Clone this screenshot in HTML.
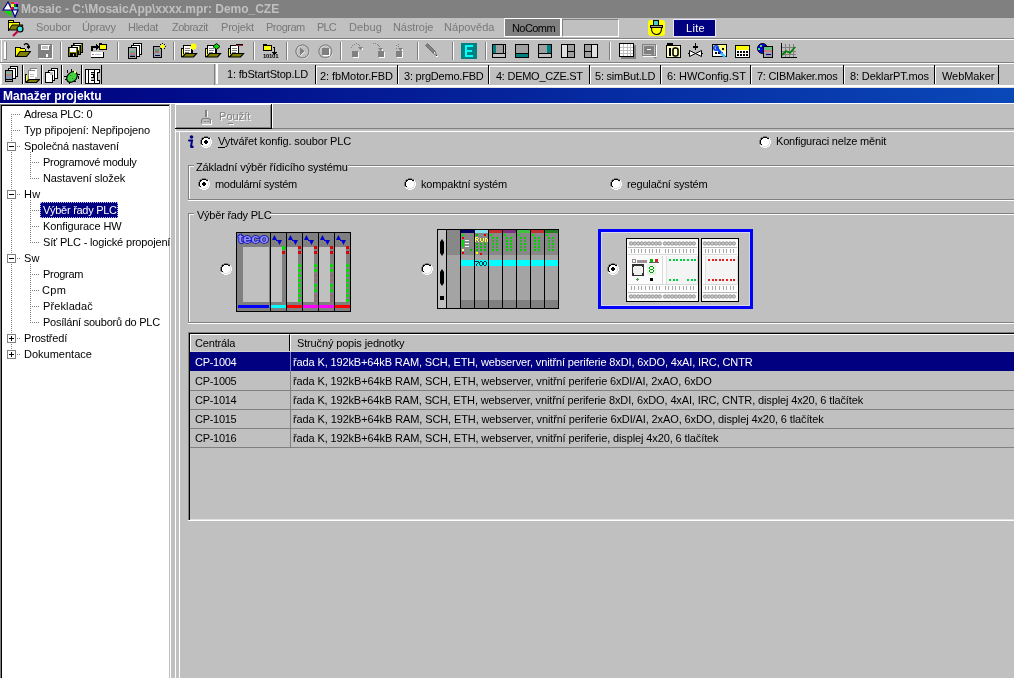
<!DOCTYPE html><html><head><meta charset="utf-8"><style>
html,body{margin:0;padding:0}
body{width:1014px;height:678px;overflow:hidden;position:relative;background:#c0c0c0;font-family:"Liberation Sans",sans-serif;font-size:11px}
.t{position:absolute;white-space:nowrap;will-change:transform}
svg{display:block}
</style></head><body>
<div style="position:absolute;left:0px;top:0px;width:1014px;height:18px;background:#808080;"></div>
<svg style="position:absolute;left:2px;top:1px" width="17" height="17" viewBox="0 0 17 17" shape-rendering="crispEdges"><path d="M6 1 L1 9 L10 9 Z" fill="#fff" stroke="#000080" stroke-width="1.2" shape-rendering="auto"/><path d="M2 10 L9 10 L9 16 Z" fill="#00e000" shape-rendering="auto"/><rect x="9" y="1" width="3" height="3" fill="#c04020"/><rect x="12" y="1" width="4" height="3" fill="#e040e0"/><rect x="9" y="3" width="3" height="3" fill="#f0f040"/><rect x="12" y="3" width="2" height="3" fill="#008000"/><rect x="14" y="3" width="2" height="3" fill="#000060"/><rect x="9" y="6" width="3" height="3" fill="#e00040"/><rect x="12" y="6" width="3" height="2" fill="#40e0f0"/><path d="M10 9 L16 9 L13 16 Z" fill="#fff" stroke="#000080" stroke-width="1.2" shape-rendering="auto"/></svg>
<div class="t" style="left:20.70px;top:1.84px;color:#c0c0c0;font-size:12px;font-weight:bold;line-height:14px;letter-spacing:-0.015px;">Mosaic - C:\MosaicApp\xxxx.mpr: Demo_CZE</div>
<svg style="position:absolute;left:8px;top:19px" width="18" height="18" viewBox="0 0 18 18" shape-rendering="crispEdges"><rect x="0" y="1" width="6" height="2" fill="#000"/><rect x="1" y="2" width="4" height="1" fill="#ffff00"/><rect x="0" y="2" width="1" height="10" fill="#000"/><rect x="1" y="3" width="10" height="6" fill="#ffff00"/><rect x="0" y="3" width="11" height="1" fill="#000"/><rect x="11" y="3" width="1" height="6" fill="#000"/><path d="M1 11 L4 6 L15 6 L12 11 Z" fill="#808000" stroke="#000" stroke-width="1" shape-rendering="auto"/><circle cx="12" cy="10" r="3" fill="#40e0e0" stroke="#000" stroke-width="1.2" shape-rendering="auto"/><path d="M10 12 L5 17" stroke="#c00040" stroke-width="2.2" shape-rendering="auto"/></svg>
<div class="t" style="left:36.20px;top:20.69px;color:#787878;font-size:11px;font-weight:normal;line-height:13px;letter-spacing:-0.040px;">Soubor</div>
<div class="t" style="left:82.00px;top:20.69px;color:#787878;font-size:11px;font-weight:normal;line-height:13px;letter-spacing:-0.180px;">Úpravy</div>
<div class="t" style="left:128.20px;top:20.69px;color:#787878;font-size:11px;font-weight:normal;line-height:13px;letter-spacing:-0.300px;">Hledat</div>
<div class="t" style="left:171.90px;top:20.69px;color:#787878;font-size:11px;font-weight:normal;line-height:13px;letter-spacing:-0.500px;">Zobrazit</div>
<div class="t" style="left:221.20px;top:20.69px;color:#787878;font-size:11px;font-weight:normal;line-height:13px;letter-spacing:-0.200px;">Projekt</div>
<div class="t" style="left:266.40px;top:20.69px;color:#787878;font-size:11px;font-weight:normal;line-height:13px;letter-spacing:-0.483px;">Program</div>
<div class="t" style="left:317.40px;top:20.69px;color:#787878;font-size:11px;font-weight:normal;line-height:13px;letter-spacing:-0.850px;">PLC</div>
<div class="t" style="left:348.70px;top:20.69px;color:#787878;font-size:11px;font-weight:normal;line-height:13px;letter-spacing:0.125px;">Debug</div>
<div class="t" style="left:392.70px;top:20.69px;color:#787878;font-size:11px;font-weight:normal;line-height:13px;letter-spacing:-0.086px;">Nástroje</div>
<div class="t" style="left:444.10px;top:20.69px;color:#787878;font-size:11px;font-weight:normal;line-height:13px;letter-spacing:0.043px;">Nápověda</div>
<div style="position:absolute;left:504px;top:18px;width:58px;height:19px;background:#ffffff;"></div>
<div style="position:absolute;left:505px;top:19px;width:55px;height:17px;background:#808080;"></div>
<div style="position:absolute;left:562px;top:19px;width:57px;height:18px;background:#c0c0c0;box-sizing:border-box;border-top:1px solid #808080;border-left:1px solid #808080;border-right:1px solid #fff;border-bottom:1px solid #fff"></div>
<div class="t" style="left:511.50px;top:21.69px;color:#000;font-size:11px;font-weight:normal;line-height:13px;letter-spacing:-0.580px;">NoComm</div>
<svg style="position:absolute;left:648px;top:20px" width="17" height="16" viewBox="0 0 17 16" shape-rendering="crispEdges"><rect x="0" y="0" width="17" height="16" rx="3" fill="#ffff00" shape-rendering="auto"/><rect x="5" y="0" width="6" height="6" fill="#000"/><rect x="6" y="1" width="4" height="4" fill="#40d0d0"/><rect x="2" y="5" width="13" height="3" fill="#000"/><rect x="3" y="6" width="11" height="1" fill="#a0a080"/><path d="M3.5 8 Q3.5 14.5 8.5 14.5 Q13.5 14.5 13.5 8" fill="none" stroke="#000" stroke-width="1.1" shape-rendering="auto"/></svg>
<div style="position:absolute;left:673px;top:19px;width:43px;height:18px;background:#e8e8f8;"></div>
<div style="position:absolute;left:674px;top:20px;width:41px;height:16px;background:#000080;"></div>
<div class="t" style="left:686.20px;top:21.69px;color:#fff;font-size:11px;font-weight:normal;line-height:13px;letter-spacing:0.333px;">Lite</div>
<div style="position:absolute;left:0px;top:38px;width:1014px;height:1px;background:#808080;"></div>
<div style="position:absolute;left:0px;top:39px;width:1014px;height:1px;background:#ffffff;"></div>
<div style="position:absolute;left:1px;top:40px;width:1px;height:22px;background:#ffffff;"></div>
<div style="position:absolute;left:0px;top:62px;width:1014px;height:1px;background:#808080;"></div>
<div style="position:absolute;left:0px;top:63px;width:1014px;height:1px;background:#ffffff;"></div>
<div style="position:absolute;left:4px;top:42px;width:2px;height:18px;background:#ffffff;"></div>
<div style="position:absolute;left:6px;top:42px;width:1px;height:18px;background:#808080;"></div>
<div style="position:absolute;left:4px;top:59px;width:3px;height:1px;background:#808080;"></div>
<svg style="position:absolute;left:15px;top:43px" width="16" height="15" viewBox="0 0 16 15" shape-rendering="crispEdges"><path d="M9 2 Q12 -1 14 3" fill="none" stroke="#000" stroke-width="1.3" shape-rendering="auto"/><rect x="12" y="3" width="3" height="2" fill="#000"/><rect x="13" y="4" width="1" height="2" fill="#000"/><rect x="0" y="4" width="6" height="1" fill="#000"/><rect x="1" y="5" width="4" height="1" fill="#ffff00"/><rect x="0" y="5" width="1" height="9" fill="#000"/><rect x="1" y="6" width="9" height="7" fill="#ffff00"/><rect x="5" y="5" width="5" height="1" fill="#000"/><rect x="10" y="6" width="1" height="2" fill="#000"/><path d="M1.5 13.5 L5 8.5 L15.5 8.5 L11.5 13.5 Z" fill="#808000" stroke="#000" stroke-width="1.2" shape-rendering="auto"/></svg>
<svg style="position:absolute;left:38px;top:44px" width="16" height="16" viewBox="0 0 16 16" shape-rendering="crispEdges"><rect x="0" y="0" width="14" height="14" fill="#808080"/><rect x="14" y="1" width="1" height="14" fill="#ffffff"/><rect x="1" y="14" width="14" height="1" fill="#ffffff"/><rect x="3" y="1" width="8" height="5" fill="#ffffff"/><rect x="4" y="2" width="6" height="3" fill="#c0c0c0"/><rect x="11" y="1" width="1" height="1" fill="#ffffff"/><rect x="8" y="10" width="2" height="3" fill="#ffffff"/></svg>
<div style="position:absolute;left:60px;top:42px;width:1px;height:18px;background:#808080;"></div>
<div style="position:absolute;left:61px;top:42px;width:1px;height:18px;background:#ffffff;"></div>
<svg style="position:absolute;left:68px;top:43px" width="16" height="15" viewBox="0 0 16 15" shape-rendering="crispEdges"><rect x="5" y="0" width="10" height="10" fill="#000"/><rect x="6" y="1" width="8" height="8" fill="#808000"/><rect x="7" y="1" width="6" height="4" fill="#ffffff"/><rect x="7" y="6" width="6" height="3" fill="#000"/><rect x="10" y="7" width="1" height="2" fill="#c0c0c0"/><rect x="3" y="2" width="10" height="10" fill="#000"/><rect x="4" y="3" width="8" height="8" fill="#808000"/><rect x="5" y="3" width="6" height="4" fill="#ffffff"/><rect x="5" y="8" width="6" height="3" fill="#000"/><rect x="8" y="9" width="1" height="2" fill="#c0c0c0"/><rect x="0" y="4" width="10" height="10" fill="#000"/><rect x="1" y="5" width="8" height="8" fill="#808000"/><rect x="2" y="5" width="6" height="4" fill="#ffffff"/><rect x="2" y="10" width="6" height="3" fill="#000"/><rect x="5" y="11" width="1" height="2" fill="#c0c0c0"/></svg>
<svg style="position:absolute;left:91px;top:43px" width="17" height="15" viewBox="0 0 17 15" shape-rendering="crispEdges"><rect x="0" y="4" width="2" height="4" fill="#000"/><rect x="0" y="3" width="6" height="2" fill="#000"/><rect x="5" y="1" width="1" height="6" fill="#000"/><rect x="6" y="2" width="1" height="4" fill="#000"/><rect x="7" y="3" width="1" height="2" fill="#000"/><rect x="8" y="1" width="8" height="6" fill="#000"/><rect x="9" y="2" width="6" height="4" fill="#ffff00"/><rect x="8" y="0" width="3" height="1" fill="#000"/><rect x="0" y="9" width="12" height="5" fill="#ffffff"/><rect x="12" y="9" width="1" height="6" fill="#000"/><rect x="0" y="14" width="13" height="1" fill="#000"/><rect x="1" y="11" width="2" height="1" fill="#c08080"/><rect x="4" y="11" width="6" height="1" fill="#c0c0e0"/></svg>
<div style="position:absolute;left:117px;top:42px;width:1px;height:18px;background:#808080;"></div>
<div style="position:absolute;left:118px;top:42px;width:1px;height:18px;background:#ffffff;"></div>
<svg style="position:absolute;left:128px;top:43px" width="14" height="16" viewBox="0 0 14 16" shape-rendering="crispEdges"><rect x="5" y="0" width="9" height="12" fill="#000"/><rect x="6" y="1" width="7" height="10" fill="#ffffff"/><rect x="3" y="2" width="9" height="12" fill="#000"/><rect x="4" y="3" width="7" height="10" fill="#ffffff"/><rect x="0" y="4" width="9" height="12" fill="#000"/><rect x="1" y="5" width="7" height="10" fill="#a0a8a8"/><rect x="2" y="8" width="5" height="2" fill="#60b080"/><rect x="2" y="10" width="5" height="2" fill="#c07080"/><rect x="2" y="12" width="5" height="1" fill="#6080c0"/><rect x="2" y="13" width="5" height="1" fill="#000"/></svg>
<svg style="position:absolute;left:152px;top:43px" width="16" height="16" viewBox="0 0 16 16" shape-rendering="crispEdges"><rect x="1" y="3" width="9" height="12" fill="#000"/><rect x="2" y="4" width="7" height="10" fill="#a0a0b0"/><rect x="3" y="6" width="4" height="2" fill="#60a060"/><rect x="3" y="8" width="4" height="2" fill="#a07070"/><rect x="3" y="12" width="5" height="1" fill="#000040"/><rect x="8" y="1" width="1" height="1" fill="#000"/><rect x="10" y="0" width="1" height="1" fill="#000"/><rect x="12" y="1" width="1" height="1" fill="#000"/><rect x="9" y="2" width="3" height="3" fill="#ffff00"/><rect x="8" y="3" width="5" height="1" fill="#ffff00"/><rect x="10" y="1" width="1" height="5" fill="#ffff00"/><rect x="8" y="5" width="1" height="1" fill="#000"/><rect x="12" y="5" width="1" height="1" fill="#000"/><rect x="13" y="3" width="1" height="1" fill="#000"/></svg>
<div style="position:absolute;left:173px;top:42px;width:1px;height:18px;background:#808080;"></div>
<div style="position:absolute;left:174px;top:42px;width:1px;height:18px;background:#ffffff;"></div>
<svg style="position:absolute;left:181px;top:43px" width="17" height="15" viewBox="0 0 17 15" shape-rendering="crispEdges"><rect x="0" y="5" width="2" height="9" fill="#000"/><rect x="1" y="6" width="1" height="7" fill="#ffff00"/><rect x="2" y="2" width="9" height="9" fill="#000"/><rect x="3" y="3" width="7" height="8" fill="#ffffff"/><rect x="4" y="5" width="5" height="1" fill="#808080"/><rect x="4" y="7" width="5" height="1" fill="#808080"/><rect x="4" y="9" width="4" height="1" fill="#808080"/><path d="M1.5 14 L4.5 10.5 L15.5 10.5 L12.5 14 Z" fill="#808000" stroke="#000" stroke-width="1.2" shape-rendering="auto"/><rect x="10" y="1" width="5" height="5" fill="#ffff00"/><rect x="9" y="3" width="7" height="1" fill="#ffff00"/><rect x="12" y="0" width="1" height="7" fill="#ffff00"/><rect x="10" y="7" width="2" height="3" fill="#000"/></svg>
<svg style="position:absolute;left:205px;top:43px" width="17" height="15" viewBox="0 0 17 15" shape-rendering="crispEdges"><rect x="0" y="5" width="2" height="9" fill="#000"/><rect x="1" y="6" width="1" height="7" fill="#ffff00"/><rect x="2" y="2" width="9" height="9" fill="#000"/><rect x="3" y="3" width="7" height="8" fill="#ffffff"/><rect x="4" y="5" width="5" height="1" fill="#808080"/><rect x="4" y="7" width="5" height="1" fill="#808080"/><rect x="4" y="9" width="4" height="1" fill="#808080"/><path d="M1.5 14 L4.5 10.5 L15.5 10.5 L12.5 14 Z" fill="#808000" stroke="#000" stroke-width="1.2" shape-rendering="auto"/><path d="M11.5 0.5 L15 3.5 L11.5 6.5 L8 3.5 Z" fill="#00e000" stroke="#000" stroke-width="1" shape-rendering="auto"/><rect x="11" y="6" width="1" height="4" fill="#000"/></svg>
<svg style="position:absolute;left:228px;top:43px" width="17" height="15" viewBox="0 0 17 15" shape-rendering="crispEdges"><rect x="0" y="5" width="2" height="9" fill="#000"/><rect x="1" y="6" width="1" height="7" fill="#ffff00"/><rect x="2" y="2" width="9" height="9" fill="#000"/><rect x="3" y="3" width="7" height="8" fill="#ffffff"/><rect x="4" y="5" width="5" height="1" fill="#808080"/><rect x="4" y="7" width="5" height="1" fill="#808080"/><rect x="4" y="9" width="4" height="1" fill="#808080"/><path d="M1.5 14 L4.5 10.5 L15.5 10.5 L12.5 14 Z" fill="#808000" stroke="#000" stroke-width="1.2" shape-rendering="auto"/><rect x="8" y="1" width="7" height="2" fill="#a03030"/><rect x="10" y="3" width="1" height="8" fill="#000"/><rect x="8" y="1" width="7" height="1" fill="#000"/></svg>
<div style="position:absolute;left:253px;top:42px;width:1px;height:18px;background:#808080;"></div>
<div style="position:absolute;left:254px;top:42px;width:1px;height:18px;background:#ffffff;"></div>
<svg style="position:absolute;left:263px;top:43px" width="17" height="16" viewBox="0 0 17 16" shape-rendering="crispEdges"><rect x="0" y="1" width="4" height="1" fill="#000"/><rect x="0" y="2" width="9" height="6" fill="#000"/><rect x="1" y="3" width="7" height="4" fill="#ffff00"/><rect x="10" y="4" width="2" height="1" fill="#000"/><rect x="11" y="4" width="1" height="8" fill="#000"/><rect x="10" y="10" width="3" height="1" fill="#000"/><rect x="9" y="9" width="5" height="1" fill="#000"/><rect x="11" y="11" width="1" height="1" fill="#000"/></svg>
<div class="t" style="left:263.00px;top:50.42px;color:#000;font-size:6px;font-weight:bold;line-height:13px;letter-spacing:-0.300px;">10101</div>
<div style="position:absolute;left:286px;top:42px;width:1px;height:18px;background:#808080;"></div>
<div style="position:absolute;left:287px;top:42px;width:1px;height:18px;background:#ffffff;"></div>
<svg style="position:absolute;left:295px;top:44px" width="16" height="16" viewBox="0 0 16 16" shape-rendering="crispEdges"><circle cx="7.5" cy="7.5" r="6.5" fill="none" stroke="#808080" stroke-width="1.2" shape-rendering="auto"/><circle cx="8" cy="8" r="6.5" fill="none" stroke="#fff" stroke-width="0.8" shape-rendering="auto"/><circle cx="7.5" cy="7.5" r="6.5" fill="none" stroke="#808080" stroke-width="1" shape-rendering="auto"/><rect x="5" y="4" width="1" height="7" fill="#808080"/><path d="M5 3.5 L10 7.5 L5 11.5 Z" fill="#808080" shape-rendering="auto"/><path d="M10 7.5 L5.5 11.5" stroke="#fff" stroke-width="1" shape-rendering="auto"/></svg>
<svg style="position:absolute;left:318px;top:44px" width="16" height="16" viewBox="0 0 16 16" shape-rendering="crispEdges"><circle cx="7.5" cy="7.5" r="6.5" fill="none" stroke="#808080" stroke-width="1.2" shape-rendering="auto"/><circle cx="8" cy="8" r="6.5" fill="none" stroke="#fff" stroke-width="0.8" shape-rendering="auto"/><circle cx="7.5" cy="7.5" r="6.5" fill="none" stroke="#808080" stroke-width="1" shape-rendering="auto"/><rect x="4" y="4" width="7" height="7" fill="#808080"/><rect x="11" y="5" width="1" height="7" fill="#ffffff"/><rect x="5" y="11" width="7" height="1" fill="#ffffff"/></svg>
<div style="position:absolute;left:340px;top:42px;width:1px;height:18px;background:#808080;"></div>
<div style="position:absolute;left:341px;top:42px;width:1px;height:18px;background:#ffffff;"></div>
<svg style="position:absolute;left:350px;top:43px" width="16" height="16" viewBox="0 0 16 16" shape-rendering="crispEdges"><rect x="1" y="4" width="1" height="1" fill="#808080"/><rect x="2" y="2" width="1" height="1" fill="#808080"/><rect x="4" y="1" width="1" height="1" fill="#808080"/><rect x="6" y="0" width="1" height="1" fill="#808080"/><rect x="8" y="1" width="1" height="1" fill="#808080"/><rect x="9" y="2" width="1" height="1" fill="#808080"/><path d="M8 4 L13 4 L10.5 7 Z" fill="#808080" shape-rendering="auto"/><rect x="12" y="5" width="1" height="2" fill="#ffffff"/><rect x="2" y="8" width="6" height="6" fill="#808080"/><rect x="8" y="9" width="1" height="6" fill="#ffffff"/><rect x="3" y="14" width="6" height="1" fill="#ffffff"/></svg>
<svg style="position:absolute;left:372px;top:43px" width="16" height="16" viewBox="0 0 16 16" shape-rendering="crispEdges"><rect x="1" y="0" width="1" height="1" fill="#808080"/><rect x="3" y="0" width="1" height="1" fill="#808080"/><rect x="5" y="1" width="1" height="1" fill="#808080"/><rect x="6" y="2" width="1" height="1" fill="#808080"/><rect x="7" y="3" width="1" height="1" fill="#808080"/><path d="M6 5 L11 5 L8.5 8 Z" fill="#808080" shape-rendering="auto"/><rect x="10" y="6" width="1" height="2" fill="#ffffff"/><rect x="6" y="8" width="6" height="6" fill="#808080"/><rect x="12" y="9" width="1" height="6" fill="#ffffff"/><rect x="7" y="14" width="6" height="1" fill="#ffffff"/></svg>
<svg style="position:absolute;left:395px;top:43px" width="16" height="16" viewBox="0 0 16 16" shape-rendering="crispEdges"><rect x="1" y="2" width="1" height="1" fill="#808080"/><rect x="3" y="1" width="1" height="1" fill="#808080"/><rect x="3" y="3" width="1" height="1" fill="#808080"/><rect x="1" y="5" width="1" height="1" fill="#808080"/><path d="M3 5 L8 5 L5.5 8 Z" fill="#808080" shape-rendering="auto"/><rect x="7" y="6" width="1" height="2" fill="#ffffff"/><rect x="1" y="8" width="6" height="6" fill="#808080"/><rect x="7" y="9" width="1" height="6" fill="#ffffff"/><rect x="2" y="14" width="6" height="1" fill="#ffffff"/></svg>
<div style="position:absolute;left:417px;top:42px;width:1px;height:18px;background:#808080;"></div>
<div style="position:absolute;left:418px;top:42px;width:1px;height:18px;background:#ffffff;"></div>
<svg style="position:absolute;left:424px;top:43px" width="16" height="16" viewBox="0 0 16 16" shape-rendering="crispEdges"><path d="M1.5 2.5 L3.5 0.5 L11 8 L9 10 Z" fill="#808080" stroke="#707070" stroke-width="1" shape-rendering="auto"/><path d="M9 10 L11 8 L12.5 12.5 Z" fill="#fff" stroke="#707070" stroke-width="1" shape-rendering="auto"/><rect x="12" y="12" width="1" height="1" fill="#404040"/><rect x="12" y="13" width="2" height="1" fill="#ffffff"/></svg>
<div style="position:absolute;left:452px;top:42px;width:1px;height:18px;background:#808080;"></div>
<div style="position:absolute;left:453px;top:42px;width:1px;height:18px;background:#ffffff;"></div>
<svg style="position:absolute;left:461px;top:43px" width="16" height="16" viewBox="0 0 16 16" shape-rendering="crispEdges"><rect x="0" y="0" width="16" height="16" fill="#008080"/><rect x="4" y="2" width="8" height="2" fill="#00ffff"/><rect x="4" y="2" width="2" height="12" fill="#00ffff"/><rect x="4" y="7" width="7" height="2" fill="#00ffff"/><rect x="4" y="12" width="8" height="2" fill="#00ffff"/></svg>
<div style="position:absolute;left:485px;top:42px;width:1px;height:18px;background:#808080;"></div>
<div style="position:absolute;left:486px;top:42px;width:1px;height:18px;background:#ffffff;"></div>
<svg style="position:absolute;left:492px;top:44px" width="14" height="14" viewBox="0 0 14 14" shape-rendering="crispEdges"><rect x="0" y="0" width="14" height="14" fill="#000"/><rect x="1" y="1" width="12" height="12" fill="#a0a0a0"/><rect x="1" y="1" width="3" height="8" fill="#008080"/><rect x="12" y="1" width="1" height="9" fill="#c0c0c0"/><rect x="11" y="1" width="1" height="9" fill="#000"/><rect x="1" y="9" width="12" height="1" fill="#000"/><rect x="1" y="10" width="12" height="3" fill="#c0c0c0"/></svg>
<svg style="position:absolute;left:515px;top:44px" width="14" height="14" viewBox="0 0 14 14" shape-rendering="crispEdges"><rect x="0" y="0" width="14" height="14" fill="#000"/><rect x="1" y="1" width="12" height="12" fill="#a0a0a0"/><rect x="1" y="9" width="12" height="1" fill="#000"/><rect x="1" y="10" width="12" height="3" fill="#008080"/></svg>
<svg style="position:absolute;left:538px;top:44px" width="14" height="14" viewBox="0 0 14 14" shape-rendering="crispEdges"><rect x="0" y="0" width="14" height="14" fill="#000"/><rect x="1" y="1" width="12" height="12" fill="#a0a0a0"/><rect x="9" y="1" width="4" height="8" fill="#008080"/><rect x="1" y="9" width="12" height="1" fill="#000"/><rect x="1" y="10" width="12" height="3" fill="#c0c0c0"/></svg>
<svg style="position:absolute;left:561px;top:44px" width="14" height="14" viewBox="0 0 14 14" shape-rendering="crispEdges"><rect x="0" y="0" width="14" height="14" fill="#000"/><rect x="1" y="1" width="12" height="12" fill="#a0a0a0"/><rect x="1" y="1" width="5" height="12" fill="#e0e0e0"/><rect x="6" y="1" width="1" height="12" fill="#000"/><rect x="7" y="7" width="6" height="1" fill="#000"/></svg>
<svg style="position:absolute;left:584px;top:44px" width="14" height="14" viewBox="0 0 14 14" shape-rendering="crispEdges"><rect x="0" y="0" width="14" height="14" fill="#000"/><rect x="1" y="1" width="12" height="12" fill="#a0a0a0"/><rect x="8" y="1" width="5" height="12" fill="#e0e0e0"/><rect x="7" y="1" width="1" height="12" fill="#000"/><rect x="1" y="7" width="6" height="1" fill="#000"/></svg>
<div style="position:absolute;left:609px;top:42px;width:1px;height:18px;background:#808080;"></div>
<div style="position:absolute;left:610px;top:42px;width:1px;height:18px;background:#ffffff;"></div>
<svg style="position:absolute;left:619px;top:43px" width="17" height="16" viewBox="0 0 17 16" shape-rendering="crispEdges"><rect x="2" y="2" width="15" height="14" fill="#808080"/><rect x="0" y="0" width="15" height="14" fill="#000"/><rect x="1" y="1" width="13" height="12" fill="#ffffff"/><rect x="4" y="1" width="1" height="12" fill="#c0c0c0"/><rect x="8" y="1" width="1" height="12" fill="#c0c0c0"/><rect x="11" y="1" width="1" height="12" fill="#c0c0c0"/><rect x="1" y="4" width="13" height="1" fill="#c0c0c0"/><rect x="1" y="7" width="13" height="1" fill="#c0c0c0"/><rect x="1" y="10" width="13" height="1" fill="#c0c0c0"/></svg>
<svg style="position:absolute;left:642px;top:44px" width="17" height="16" viewBox="0 0 17 16" shape-rendering="crispEdges"><rect x="0" y="0" width="14" height="12" fill="#808080"/><rect x="1" y="1" width="12" height="10" fill="#c0c0c0"/><rect x="2" y="2" width="10" height="8" fill="#808080"/><rect x="14" y="1" width="1" height="12" fill="#ffffff"/><rect x="5" y="5" width="4" height="1" fill="#ffffff"/><path d="M10 10 L14 14" stroke="#808080" stroke-width="2" shape-rendering="auto"/><rect x="1" y="12" width="13" height="1" fill="#ffffff"/></svg>
<svg style="position:absolute;left:666px;top:43px" width="16" height="16" viewBox="0 0 16 16" shape-rendering="crispEdges"><rect x="1" y="0" width="6" height="2" fill="#000"/><rect x="0" y="2" width="15" height="13" fill="#000"/><rect x="1" y="3" width="13" height="11" fill="#ffffc0"/><rect x="3" y="5" width="2" height="8" fill="#000"/><rect x="7" y="5" width="5" height="8" rx="2" fill="none" stroke="#000" stroke-width="1.6" shape-rendering="auto"/></svg>
<svg style="position:absolute;left:688px;top:43px" width="16" height="16" viewBox="0 0 16 16" shape-rendering="crispEdges"><rect x="7" y="0" width="1" height="7" fill="#000"/><rect x="5" y="3" width="5" height="2" fill="#000"/><path d="M1.5 7.5 L7.5 10.5 L1.5 13.5 Z M13.5 7.5 L7.5 10.5 L13.5 13.5 Z" fill="#fff" stroke="#000" stroke-width="1" shape-rendering="auto"/><rect x="0" y="10" width="2" height="1" fill="#000"/><rect x="13" y="10" width="2" height="1" fill="#000"/></svg>
<svg style="position:absolute;left:712px;top:44px" width="16" height="16" viewBox="0 0 16 16" shape-rendering="crispEdges"><rect x="0" y="0" width="15" height="13" fill="#000"/><rect x="1" y="1" width="13" height="11" fill="#ffff80"/><rect x="1" y="7" width="13" height="5" fill="#ffffff"/><rect x="3" y="8" width="2" height="2" fill="#000"/><rect x="6" y="8" width="2" height="2" fill="#000"/><rect x="9" y="8" width="2" height="2" fill="#000"/><rect x="10" y="4" width="2" height="2" fill="#000"/><path d="M4 3 L10 10" stroke="#0040ff" stroke-width="2.5" shape-rendering="auto"/><path d="M9 9 L13 13" stroke="#40c0ff" stroke-width="2.5" shape-rendering="auto"/><circle cx="4" cy="4" r="2.2" fill="none" stroke="#0040ff" stroke-width="1.6" shape-rendering="auto"/></svg>
<svg style="position:absolute;left:735px;top:45px" width="16" height="14" viewBox="0 0 16 14" shape-rendering="crispEdges"><rect x="0" y="0" width="15" height="13" fill="#000"/><rect x="1" y="1" width="13" height="11" fill="#ffffff"/><rect x="1" y="1" width="13" height="4" fill="#ffff00"/><rect x="2" y="6" width="2" height="2" fill="#000"/><rect x="2" y="9" width="2" height="2" fill="#000"/><rect x="5" y="6" width="2" height="2" fill="#000"/><rect x="5" y="9" width="2" height="2" fill="#000"/><rect x="8" y="6" width="2" height="2" fill="#000"/><rect x="8" y="9" width="2" height="2" fill="#000"/><rect x="11" y="6" width="2" height="2" fill="#000"/><rect x="11" y="9" width="2" height="2" fill="#000"/></svg>
<svg style="position:absolute;left:757px;top:43px" width="17" height="16" viewBox="0 0 17 16" shape-rendering="crispEdges"><circle cx="5.5" cy="5.5" r="5" fill="#0000e0" stroke="#000" stroke-width="1" shape-rendering="auto"/><rect x="3" y="2" width="2" height="2" fill="#40e080"/><rect x="7" y="3" width="3" height="3" fill="#40e080"/><rect x="1" y="5" width="2" height="2" fill="#40e080"/><rect x="6" y="3" width="10" height="12" fill="#000"/><rect x="7" y="4" width="8" height="10" fill="#a0a0b0"/><rect x="7" y="4" width="8" height="3" fill="#60c080"/><rect x="7" y="7" width="8" height="2" fill="#d08080"/><rect x="9" y="11" width="5" height="1" fill="#000080"/></svg>
<svg style="position:absolute;left:780px;top:43px" width="17" height="16" viewBox="0 0 17 16" shape-rendering="crispEdges"><rect x="5" y="1" width="1" height="13" fill="#808080"/><rect x="9" y="1" width="1" height="13" fill="#808080"/><rect x="13" y="1" width="1" height="13" fill="#808080"/><rect x="1" y="4" width="15" height="1" fill="#808080"/><rect x="1" y="8" width="15" height="1" fill="#808080"/><rect x="1" y="11" width="15" height="1" fill="#808080"/><rect x="1" y="0" width="1" height="15" fill="#000"/><rect x="1" y="14" width="16" height="1" fill="#000"/><path d="M2 12 L6 8 L10 10 L15 4" fill="none" stroke="#008000" stroke-width="1.8" shape-rendering="auto"/></svg>
<div style="position:absolute;left:0px;top:64px;width:1px;height:21px;background:#ffffff;"></div>
<div style="position:absolute;left:22px;top:65px;width:1px;height:19px;background:#000;"></div>
<div style="position:absolute;left:41px;top:65px;width:1px;height:19px;background:#000;"></div>
<div style="position:absolute;left:61px;top:65px;width:1px;height:19px;background:#000;"></div>
<div style="position:absolute;left:81px;top:65px;width:1px;height:19px;background:#000;"></div>
<div style="position:absolute;left:101px;top:65px;width:1px;height:19px;background:#000;"></div>
<div style="position:absolute;left:1px;top:65px;width:1px;height:19px;background:#ffffff;"></div>
<div style="position:absolute;left:23px;top:65px;width:1px;height:19px;background:#ffffff;"></div>
<div style="position:absolute;left:42px;top:65px;width:1px;height:19px;background:#ffffff;"></div>
<div style="position:absolute;left:62px;top:65px;width:1px;height:19px;background:#ffffff;"></div>
<div style="position:absolute;left:82px;top:65px;width:1px;height:19px;background:#ffffff;"></div>
<svg style="position:absolute;left:5px;top:66px" width="14" height="16" viewBox="0 0 14 16" shape-rendering="crispEdges"><rect x="5" y="0" width="8" height="11" fill="#000"/><rect x="6" y="1" width="6" height="9" fill="#ffffff"/><rect x="3" y="2" width="8" height="11" fill="#000"/><rect x="4" y="3" width="6" height="9" fill="#ffffff"/><rect x="0" y="4" width="8" height="12" fill="#000"/><rect x="1" y="5" width="6" height="10" fill="#a0a0a0"/><rect x="1" y="6" width="6" height="2" fill="#88b098"/><rect x="1" y="8" width="6" height="2" fill="#b08888"/><rect x="1" y="10" width="6" height="3" fill="#8898b8"/><rect x="1" y="13" width="6" height="1" fill="#000"/></svg>
<svg style="position:absolute;left:25px;top:68px" width="15" height="15" viewBox="0 0 15 15" shape-rendering="crispEdges"><rect x="5" y="0" width="7" height="9" fill="#808080"/><rect x="6" y="1" width="6" height="8" fill="#ffffff"/><rect x="3" y="2" width="7" height="9" fill="#808080"/><rect x="4" y="3" width="6" height="8" fill="#ffffff"/><rect x="5" y="6" width="4" height="1" fill="#c0c0c0"/><rect x="5" y="8" width="4" height="1" fill="#c0c0c0"/><rect x="0" y="6" width="2" height="8" fill="#000"/><rect x="1" y="7" width="1" height="6" fill="#ffff00"/><path d="M1 14.5 L4 11.5 L14.5 11.5 L11.5 14.5 Z" fill="#808000" stroke="#000" stroke-width="1.2" shape-rendering="auto"/></svg>
<svg style="position:absolute;left:45px;top:68px" width="14" height="15" viewBox="0 0 14 15" shape-rendering="crispEdges"><rect x="6" y="0" width="7" height="11" fill="#000"/><rect x="7" y="1" width="5" height="9" fill="#ffffff"/><rect x="3" y="2" width="7" height="11" fill="#000"/><rect x="4" y="3" width="5" height="9" fill="#ffffff"/><rect x="0" y="4" width="8" height="11" fill="#000"/><rect x="1" y="5" width="6" height="9" fill="#ffffff"/><rect x="5" y="4" width="3" height="3" fill="#c0c0c0"/></svg>
<svg style="position:absolute;left:64px;top:69px" width="17" height="15" viewBox="0 0 17 15" shape-rendering="crispEdges"><ellipse cx="8" cy="8" rx="4.5" ry="6" transform="rotate(45 8 8)" fill="#40d040" stroke="#000" stroke-width="1.2" shape-rendering="auto"/><rect x="10" y="2" width="2" height="2" fill="#ffff80"/><rect x="0" y="7" width="3" height="1" fill="#000"/><rect x="3" y="1" width="1" height="3" fill="#000"/><rect x="7" y="0" width="1" height="3" fill="#000"/><rect x="13" y="5" width="3" height="1" fill="#000"/><rect x="14" y="7" width="1" height="3" fill="#000"/><rect x="5" y="13" width="1" height="2" fill="#000"/><rect x="10" y="12" width="2" height="1" fill="#000"/><rect x="1" y="10" width="2" height="1" fill="#000"/><rect x="6" y="6" width="1" height="1" fill="#208020"/><rect x="8" y="9" width="1" height="1" fill="#208020"/></svg>
<svg style="position:absolute;left:85px;top:69px" width="16" height="15" viewBox="0 0 16 15" shape-rendering="crispEdges"><rect x="0" y="0" width="4" height="15" fill="#000"/><rect x="3" y="0" width="3" height="15" fill="#000"/><rect x="3" y="0" width="7" height="4" fill="#000"/><rect x="3" y="5" width="6" height="4" fill="#000"/><rect x="3" y="11" width="7" height="4" fill="#000"/><rect x="9" y="0" width="4" height="15" fill="#000"/><rect x="9" y="0" width="6" height="4" fill="#000"/><rect x="9" y="11" width="6" height="4" fill="#000"/><rect x="1" y="1" width="2" height="13" fill="#ffffff"/><rect x="4" y="1" width="2" height="13" fill="#ffffff"/><rect x="4" y="1" width="5" height="2" fill="#ffffff"/><rect x="4" y="6" width="4" height="2" fill="#ffffff"/><rect x="4" y="12" width="5" height="2" fill="#ffffff"/><rect x="10" y="1" width="2" height="13" fill="#ffffff"/><rect x="10" y="1" width="4" height="2" fill="#ffffff"/><rect x="10" y="12" width="4" height="2" fill="#ffffff"/></svg>
<div style="position:absolute;left:214px;top:64px;width:1px;height:21px;background:#808080;"></div>
<div style="position:absolute;left:216px;top:64px;width:2px;height:20px;background:#ffffff;"></div>
<div style="position:absolute;left:315px;top:65px;width:1px;height:19px;background:#000;"></div>
<div class="t" style="left:226.70px;top:67.69px;color:#000;font-size:11px;font-weight:normal;line-height:13px;letter-spacing:-0.200px;">1: fbStartStop.LD</div>
<div style="position:absolute;left:397px;top:65px;width:1px;height:19px;background:#000;"></div>
<div style="position:absolute;left:316px;top:66px;width:81px;height:1px;background:#ffffff;"></div>
<div style="position:absolute;left:316px;top:66px;width:1px;height:18px;background:#ffffff;"></div>
<div class="t" style="left:319.70px;top:69.69px;color:#000;font-size:11px;font-weight:normal;line-height:13px;letter-spacing:-0.077px;">2: fbMotor.FBD</div>
<div style="position:absolute;left:488px;top:65px;width:1px;height:19px;background:#000;"></div>
<div style="position:absolute;left:398px;top:66px;width:90px;height:1px;background:#ffffff;"></div>
<div style="position:absolute;left:398px;top:66px;width:1px;height:18px;background:#ffffff;"></div>
<div class="t" style="left:403.50px;top:69.69px;color:#000;font-size:11px;font-weight:normal;line-height:13px;letter-spacing:-0.215px;">3: prgDemo.FBD</div>
<div style="position:absolute;left:589px;top:65px;width:1px;height:19px;background:#000;"></div>
<div style="position:absolute;left:489px;top:66px;width:100px;height:1px;background:#ffffff;"></div>
<div style="position:absolute;left:489px;top:66px;width:1px;height:18px;background:#ffffff;"></div>
<div class="t" style="left:496.10px;top:69.69px;color:#000;font-size:11px;font-weight:normal;line-height:13px;letter-spacing:-0.262px;">4: DEMO_CZE.ST</div>
<div style="position:absolute;left:660px;top:65px;width:1px;height:19px;background:#000;"></div>
<div style="position:absolute;left:590px;top:66px;width:70px;height:1px;background:#ffffff;"></div>
<div style="position:absolute;left:590px;top:66px;width:1px;height:18px;background:#ffffff;"></div>
<div class="t" style="left:594.90px;top:69.69px;color:#000;font-size:11px;font-weight:normal;line-height:13px;letter-spacing:-0.236px;">5: simBut.LD</div>
<div style="position:absolute;left:750px;top:65px;width:1px;height:19px;background:#000;"></div>
<div style="position:absolute;left:661px;top:66px;width:89px;height:1px;background:#ffffff;"></div>
<div style="position:absolute;left:661px;top:66px;width:1px;height:18px;background:#ffffff;"></div>
<div class="t" style="left:666.70px;top:69.69px;color:#000;font-size:11px;font-weight:normal;line-height:13px;letter-spacing:-0.046px;">6: HWConfig.ST</div>
<div style="position:absolute;left:843px;top:65px;width:1px;height:19px;background:#000;"></div>
<div style="position:absolute;left:751px;top:66px;width:92px;height:1px;background:#ffffff;"></div>
<div style="position:absolute;left:751px;top:66px;width:1px;height:18px;background:#ffffff;"></div>
<div class="t" style="left:757.40px;top:69.69px;color:#000;font-size:11px;font-weight:normal;line-height:13px;letter-spacing:-0.264px;">7: CIBMaker.mos</div>
<div style="position:absolute;left:934px;top:65px;width:1px;height:19px;background:#000;"></div>
<div style="position:absolute;left:844px;top:66px;width:90px;height:1px;background:#ffffff;"></div>
<div style="position:absolute;left:844px;top:66px;width:1px;height:18px;background:#ffffff;"></div>
<div class="t" style="left:850.10px;top:69.69px;color:#000;font-size:11px;font-weight:normal;line-height:13px;letter-spacing:-0.121px;">8: DeklarPT.mos</div>
<div style="position:absolute;left:998px;top:65px;width:1px;height:19px;background:#000;"></div>
<div style="position:absolute;left:935px;top:66px;width:63px;height:1px;background:#ffffff;"></div>
<div style="position:absolute;left:935px;top:66px;width:1px;height:18px;background:#ffffff;"></div>
<div class="t" style="left:941.70px;top:69.69px;color:#000;font-size:11px;font-weight:normal;line-height:13px;letter-spacing:-0.071px;">WebMaker</div>
<div style="position:absolute;left:0px;top:85px;width:1014px;height:2px;background:#ffffff;"></div>
<div style="position:absolute;left:0px;top:87px;width:1014px;height:1px;background:#dfdfdf;"></div>
<div style="position:absolute;left:0px;top:88px;width:1014px;height:15px;background:#000080;background:linear-gradient(90deg,#000080 0%,#0a48b8 100%)"></div>
<div class="t" style="left:2.60px;top:88.84px;color:#fff;font-size:12px;font-weight:bold;line-height:14px;letter-spacing:-0.007px;">Manažer projektu</div>
<div style="position:absolute;left:0px;top:103px;width:1014px;height:1px;background:#ffffff;"></div>
<div style="position:absolute;left:0px;top:104px;width:171px;height:574px;background:#ffffff;"></div>
<div style="position:absolute;left:0px;top:104px;width:170px;height:1px;background:#808080;"></div>
<div style="position:absolute;left:0px;top:104px;width:1px;height:574px;background:#808080;"></div>
<div style="position:absolute;left:1px;top:105px;width:168px;height:1px;background:#000;"></div>
<div style="position:absolute;left:1px;top:105px;width:1px;height:573px;background:#000;"></div>
<div style="position:absolute;left:169px;top:105px;width:1px;height:573px;background:#c0c0c0;"></div>
<div style="position:absolute;left:170px;top:104px;width:1px;height:574px;background:#ffffff;"></div>
<svg style="position:absolute;left:0px;top:0px" width="171" height="410" viewBox="0 0 171 410" shape-rendering="crispEdges"><rect x="11" y="114" width="1" height="1" fill="#808080"/><rect x="11" y="116" width="1" height="1" fill="#808080"/><rect x="11" y="118" width="1" height="1" fill="#808080"/><rect x="11" y="120" width="1" height="1" fill="#808080"/><rect x="11" y="122" width="1" height="1" fill="#808080"/><rect x="11" y="124" width="1" height="1" fill="#808080"/><rect x="11" y="126" width="1" height="1" fill="#808080"/><rect x="11" y="128" width="1" height="1" fill="#808080"/><rect x="11" y="130" width="1" height="1" fill="#808080"/><rect x="11" y="132" width="1" height="1" fill="#808080"/><rect x="11" y="134" width="1" height="1" fill="#808080"/><rect x="11" y="136" width="1" height="1" fill="#808080"/><rect x="11" y="138" width="1" height="1" fill="#808080"/><rect x="11" y="140" width="1" height="1" fill="#808080"/><rect x="11" y="142" width="1" height="1" fill="#808080"/><rect x="11" y="144" width="1" height="1" fill="#808080"/><rect x="11" y="146" width="1" height="1" fill="#808080"/><rect x="11" y="148" width="1" height="1" fill="#808080"/><rect x="11" y="150" width="1" height="1" fill="#808080"/><rect x="11" y="152" width="1" height="1" fill="#808080"/><rect x="11" y="154" width="1" height="1" fill="#808080"/><rect x="11" y="156" width="1" height="1" fill="#808080"/><rect x="11" y="158" width="1" height="1" fill="#808080"/><rect x="11" y="160" width="1" height="1" fill="#808080"/><rect x="11" y="162" width="1" height="1" fill="#808080"/><rect x="11" y="164" width="1" height="1" fill="#808080"/><rect x="11" y="166" width="1" height="1" fill="#808080"/><rect x="11" y="168" width="1" height="1" fill="#808080"/><rect x="11" y="170" width="1" height="1" fill="#808080"/><rect x="11" y="172" width="1" height="1" fill="#808080"/><rect x="11" y="174" width="1" height="1" fill="#808080"/><rect x="11" y="176" width="1" height="1" fill="#808080"/><rect x="11" y="178" width="1" height="1" fill="#808080"/><rect x="11" y="180" width="1" height="1" fill="#808080"/><rect x="11" y="182" width="1" height="1" fill="#808080"/><rect x="11" y="184" width="1" height="1" fill="#808080"/><rect x="11" y="186" width="1" height="1" fill="#808080"/><rect x="11" y="188" width="1" height="1" fill="#808080"/><rect x="11" y="190" width="1" height="1" fill="#808080"/><rect x="11" y="192" width="1" height="1" fill="#808080"/><rect x="11" y="194" width="1" height="1" fill="#808080"/><rect x="11" y="196" width="1" height="1" fill="#808080"/><rect x="11" y="198" width="1" height="1" fill="#808080"/><rect x="11" y="200" width="1" height="1" fill="#808080"/><rect x="11" y="202" width="1" height="1" fill="#808080"/><rect x="11" y="204" width="1" height="1" fill="#808080"/><rect x="11" y="206" width="1" height="1" fill="#808080"/><rect x="11" y="208" width="1" height="1" fill="#808080"/><rect x="11" y="210" width="1" height="1" fill="#808080"/><rect x="11" y="212" width="1" height="1" fill="#808080"/><rect x="11" y="214" width="1" height="1" fill="#808080"/><rect x="11" y="216" width="1" height="1" fill="#808080"/><rect x="11" y="218" width="1" height="1" fill="#808080"/><rect x="11" y="220" width="1" height="1" fill="#808080"/><rect x="11" y="222" width="1" height="1" fill="#808080"/><rect x="11" y="224" width="1" height="1" fill="#808080"/><rect x="11" y="226" width="1" height="1" fill="#808080"/><rect x="11" y="228" width="1" height="1" fill="#808080"/><rect x="11" y="230" width="1" height="1" fill="#808080"/><rect x="11" y="232" width="1" height="1" fill="#808080"/><rect x="11" y="234" width="1" height="1" fill="#808080"/><rect x="11" y="236" width="1" height="1" fill="#808080"/><rect x="11" y="238" width="1" height="1" fill="#808080"/><rect x="11" y="240" width="1" height="1" fill="#808080"/><rect x="11" y="242" width="1" height="1" fill="#808080"/><rect x="11" y="244" width="1" height="1" fill="#808080"/><rect x="11" y="246" width="1" height="1" fill="#808080"/><rect x="11" y="248" width="1" height="1" fill="#808080"/><rect x="11" y="250" width="1" height="1" fill="#808080"/><rect x="11" y="252" width="1" height="1" fill="#808080"/><rect x="11" y="254" width="1" height="1" fill="#808080"/><rect x="11" y="256" width="1" height="1" fill="#808080"/><rect x="11" y="258" width="1" height="1" fill="#808080"/><rect x="11" y="260" width="1" height="1" fill="#808080"/><rect x="11" y="262" width="1" height="1" fill="#808080"/><rect x="11" y="264" width="1" height="1" fill="#808080"/><rect x="11" y="266" width="1" height="1" fill="#808080"/><rect x="11" y="268" width="1" height="1" fill="#808080"/><rect x="11" y="270" width="1" height="1" fill="#808080"/><rect x="11" y="272" width="1" height="1" fill="#808080"/><rect x="11" y="274" width="1" height="1" fill="#808080"/><rect x="11" y="276" width="1" height="1" fill="#808080"/><rect x="11" y="278" width="1" height="1" fill="#808080"/><rect x="11" y="280" width="1" height="1" fill="#808080"/><rect x="11" y="282" width="1" height="1" fill="#808080"/><rect x="11" y="284" width="1" height="1" fill="#808080"/><rect x="11" y="286" width="1" height="1" fill="#808080"/><rect x="11" y="288" width="1" height="1" fill="#808080"/><rect x="11" y="290" width="1" height="1" fill="#808080"/><rect x="11" y="292" width="1" height="1" fill="#808080"/><rect x="11" y="294" width="1" height="1" fill="#808080"/><rect x="11" y="296" width="1" height="1" fill="#808080"/><rect x="11" y="298" width="1" height="1" fill="#808080"/><rect x="11" y="300" width="1" height="1" fill="#808080"/><rect x="11" y="302" width="1" height="1" fill="#808080"/><rect x="11" y="304" width="1" height="1" fill="#808080"/><rect x="11" y="306" width="1" height="1" fill="#808080"/><rect x="11" y="308" width="1" height="1" fill="#808080"/><rect x="11" y="310" width="1" height="1" fill="#808080"/><rect x="11" y="312" width="1" height="1" fill="#808080"/><rect x="11" y="314" width="1" height="1" fill="#808080"/><rect x="11" y="316" width="1" height="1" fill="#808080"/><rect x="11" y="318" width="1" height="1" fill="#808080"/><rect x="11" y="320" width="1" height="1" fill="#808080"/><rect x="11" y="322" width="1" height="1" fill="#808080"/><rect x="11" y="324" width="1" height="1" fill="#808080"/><rect x="11" y="326" width="1" height="1" fill="#808080"/><rect x="11" y="328" width="1" height="1" fill="#808080"/><rect x="11" y="330" width="1" height="1" fill="#808080"/><rect x="11" y="332" width="1" height="1" fill="#808080"/><rect x="11" y="334" width="1" height="1" fill="#808080"/><rect x="11" y="336" width="1" height="1" fill="#808080"/><rect x="11" y="338" width="1" height="1" fill="#808080"/><rect x="11" y="340" width="1" height="1" fill="#808080"/><rect x="11" y="342" width="1" height="1" fill="#808080"/><rect x="11" y="344" width="1" height="1" fill="#808080"/><rect x="11" y="346" width="1" height="1" fill="#808080"/><rect x="11" y="348" width="1" height="1" fill="#808080"/><rect x="30" y="152" width="1" height="1" fill="#808080"/><rect x="30" y="154" width="1" height="1" fill="#808080"/><rect x="30" y="156" width="1" height="1" fill="#808080"/><rect x="30" y="158" width="1" height="1" fill="#808080"/><rect x="30" y="160" width="1" height="1" fill="#808080"/><rect x="30" y="162" width="1" height="1" fill="#808080"/><rect x="30" y="164" width="1" height="1" fill="#808080"/><rect x="30" y="166" width="1" height="1" fill="#808080"/><rect x="30" y="168" width="1" height="1" fill="#808080"/><rect x="30" y="170" width="1" height="1" fill="#808080"/><rect x="30" y="172" width="1" height="1" fill="#808080"/><rect x="30" y="174" width="1" height="1" fill="#808080"/><rect x="30" y="176" width="1" height="1" fill="#808080"/><rect x="30" y="178" width="1" height="1" fill="#808080"/><rect x="30" y="200" width="1" height="1" fill="#808080"/><rect x="30" y="202" width="1" height="1" fill="#808080"/><rect x="30" y="204" width="1" height="1" fill="#808080"/><rect x="30" y="206" width="1" height="1" fill="#808080"/><rect x="30" y="208" width="1" height="1" fill="#808080"/><rect x="30" y="210" width="1" height="1" fill="#808080"/><rect x="30" y="212" width="1" height="1" fill="#808080"/><rect x="30" y="214" width="1" height="1" fill="#808080"/><rect x="30" y="216" width="1" height="1" fill="#808080"/><rect x="30" y="218" width="1" height="1" fill="#808080"/><rect x="30" y="220" width="1" height="1" fill="#808080"/><rect x="30" y="222" width="1" height="1" fill="#808080"/><rect x="30" y="224" width="1" height="1" fill="#808080"/><rect x="30" y="226" width="1" height="1" fill="#808080"/><rect x="30" y="228" width="1" height="1" fill="#808080"/><rect x="30" y="230" width="1" height="1" fill="#808080"/><rect x="30" y="232" width="1" height="1" fill="#808080"/><rect x="30" y="234" width="1" height="1" fill="#808080"/><rect x="30" y="236" width="1" height="1" fill="#808080"/><rect x="30" y="238" width="1" height="1" fill="#808080"/><rect x="30" y="240" width="1" height="1" fill="#808080"/><rect x="30" y="242" width="1" height="1" fill="#808080"/><rect x="30" y="264" width="1" height="1" fill="#808080"/><rect x="30" y="266" width="1" height="1" fill="#808080"/><rect x="30" y="268" width="1" height="1" fill="#808080"/><rect x="30" y="270" width="1" height="1" fill="#808080"/><rect x="30" y="272" width="1" height="1" fill="#808080"/><rect x="30" y="274" width="1" height="1" fill="#808080"/><rect x="30" y="276" width="1" height="1" fill="#808080"/><rect x="30" y="278" width="1" height="1" fill="#808080"/><rect x="30" y="280" width="1" height="1" fill="#808080"/><rect x="30" y="282" width="1" height="1" fill="#808080"/><rect x="30" y="284" width="1" height="1" fill="#808080"/><rect x="30" y="286" width="1" height="1" fill="#808080"/><rect x="30" y="288" width="1" height="1" fill="#808080"/><rect x="30" y="290" width="1" height="1" fill="#808080"/><rect x="30" y="292" width="1" height="1" fill="#808080"/><rect x="30" y="294" width="1" height="1" fill="#808080"/><rect x="30" y="296" width="1" height="1" fill="#808080"/><rect x="30" y="298" width="1" height="1" fill="#808080"/><rect x="30" y="300" width="1" height="1" fill="#808080"/><rect x="30" y="302" width="1" height="1" fill="#808080"/><rect x="30" y="304" width="1" height="1" fill="#808080"/><rect x="30" y="306" width="1" height="1" fill="#808080"/><rect x="30" y="308" width="1" height="1" fill="#808080"/><rect x="30" y="310" width="1" height="1" fill="#808080"/><rect x="30" y="312" width="1" height="1" fill="#808080"/><rect x="30" y="314" width="1" height="1" fill="#808080"/><rect x="30" y="316" width="1" height="1" fill="#808080"/><rect x="30" y="318" width="1" height="1" fill="#808080"/><rect x="30" y="320" width="1" height="1" fill="#808080"/><rect x="30" y="322" width="1" height="1" fill="#808080"/><rect x="13" y="114" width="1" height="1" fill="#808080"/><rect x="15" y="114" width="1" height="1" fill="#808080"/><rect x="17" y="114" width="1" height="1" fill="#808080"/><rect x="19" y="114" width="1" height="1" fill="#808080"/><rect x="13" y="130" width="1" height="1" fill="#808080"/><rect x="15" y="130" width="1" height="1" fill="#808080"/><rect x="17" y="130" width="1" height="1" fill="#808080"/><rect x="19" y="130" width="1" height="1" fill="#808080"/><rect x="13" y="146" width="1" height="1" fill="#808080"/><rect x="15" y="146" width="1" height="1" fill="#808080"/><rect x="17" y="146" width="1" height="1" fill="#808080"/><rect x="19" y="146" width="1" height="1" fill="#808080"/><rect x="7" y="142" width="9" height="9" fill="#808080"/><rect x="8" y="143" width="7" height="7" fill="#ffffff"/><rect x="9" y="146" width="5" height="1" fill="#000"/><rect x="32" y="162" width="1" height="1" fill="#808080"/><rect x="34" y="162" width="1" height="1" fill="#808080"/><rect x="36" y="162" width="1" height="1" fill="#808080"/><rect x="38" y="162" width="1" height="1" fill="#808080"/><rect x="32" y="178" width="1" height="1" fill="#808080"/><rect x="34" y="178" width="1" height="1" fill="#808080"/><rect x="36" y="178" width="1" height="1" fill="#808080"/><rect x="38" y="178" width="1" height="1" fill="#808080"/><rect x="13" y="194" width="1" height="1" fill="#808080"/><rect x="15" y="194" width="1" height="1" fill="#808080"/><rect x="17" y="194" width="1" height="1" fill="#808080"/><rect x="19" y="194" width="1" height="1" fill="#808080"/><rect x="7" y="190" width="9" height="9" fill="#808080"/><rect x="8" y="191" width="7" height="7" fill="#ffffff"/><rect x="9" y="194" width="5" height="1" fill="#000"/><rect x="32" y="210" width="1" height="1" fill="#808080"/><rect x="34" y="210" width="1" height="1" fill="#808080"/><rect x="36" y="210" width="1" height="1" fill="#808080"/><rect x="38" y="210" width="1" height="1" fill="#808080"/><rect x="32" y="226" width="1" height="1" fill="#808080"/><rect x="34" y="226" width="1" height="1" fill="#808080"/><rect x="36" y="226" width="1" height="1" fill="#808080"/><rect x="38" y="226" width="1" height="1" fill="#808080"/><rect x="32" y="242" width="1" height="1" fill="#808080"/><rect x="34" y="242" width="1" height="1" fill="#808080"/><rect x="36" y="242" width="1" height="1" fill="#808080"/><rect x="38" y="242" width="1" height="1" fill="#808080"/><rect x="13" y="258" width="1" height="1" fill="#808080"/><rect x="15" y="258" width="1" height="1" fill="#808080"/><rect x="17" y="258" width="1" height="1" fill="#808080"/><rect x="19" y="258" width="1" height="1" fill="#808080"/><rect x="7" y="254" width="9" height="9" fill="#808080"/><rect x="8" y="255" width="7" height="7" fill="#ffffff"/><rect x="9" y="258" width="5" height="1" fill="#000"/><rect x="32" y="274" width="1" height="1" fill="#808080"/><rect x="34" y="274" width="1" height="1" fill="#808080"/><rect x="36" y="274" width="1" height="1" fill="#808080"/><rect x="38" y="274" width="1" height="1" fill="#808080"/><rect x="32" y="290" width="1" height="1" fill="#808080"/><rect x="34" y="290" width="1" height="1" fill="#808080"/><rect x="36" y="290" width="1" height="1" fill="#808080"/><rect x="38" y="290" width="1" height="1" fill="#808080"/><rect x="32" y="306" width="1" height="1" fill="#808080"/><rect x="34" y="306" width="1" height="1" fill="#808080"/><rect x="36" y="306" width="1" height="1" fill="#808080"/><rect x="38" y="306" width="1" height="1" fill="#808080"/><rect x="32" y="322" width="1" height="1" fill="#808080"/><rect x="34" y="322" width="1" height="1" fill="#808080"/><rect x="36" y="322" width="1" height="1" fill="#808080"/><rect x="38" y="322" width="1" height="1" fill="#808080"/><rect x="13" y="338" width="1" height="1" fill="#808080"/><rect x="15" y="338" width="1" height="1" fill="#808080"/><rect x="17" y="338" width="1" height="1" fill="#808080"/><rect x="19" y="338" width="1" height="1" fill="#808080"/><rect x="7" y="334" width="9" height="9" fill="#808080"/><rect x="8" y="335" width="7" height="7" fill="#ffffff"/><rect x="9" y="338" width="5" height="1" fill="#000"/><rect x="11" y="336" width="1" height="5" fill="#000"/><rect x="13" y="354" width="1" height="1" fill="#808080"/><rect x="15" y="354" width="1" height="1" fill="#808080"/><rect x="17" y="354" width="1" height="1" fill="#808080"/><rect x="19" y="354" width="1" height="1" fill="#808080"/><rect x="7" y="350" width="9" height="9" fill="#808080"/><rect x="8" y="351" width="7" height="7" fill="#ffffff"/><rect x="9" y="354" width="5" height="1" fill="#000"/><rect x="11" y="352" width="1" height="5" fill="#000"/></svg>
<div class="t" style="left:23.60px;top:107.69px;color:#000;font-size:11px;font-weight:normal;line-height:13px;letter-spacing:-0.250px;">Adresa PLC: 0</div>
<div class="t" style="left:23.70px;top:123.69px;color:#000;font-size:11px;font-weight:normal;line-height:13px;letter-spacing:-0.088px;">Typ připojení: Nepřipojeno</div>
<div class="t" style="left:23.70px;top:139.69px;color:#000;font-size:11px;font-weight:normal;line-height:13px;letter-spacing:-0.094px;">Společná nastavení</div>
<div class="t" style="left:42.70px;top:155.69px;color:#000;font-size:11px;font-weight:normal;line-height:13px;letter-spacing:-0.287px;">Programové moduly</div>
<div class="t" style="left:42.70px;top:171.69px;color:#000;font-size:11px;font-weight:normal;line-height:13px;letter-spacing:-0.100px;">Nastavení složek</div>
<div class="t" style="left:23.70px;top:187.69px;color:#000;font-size:11px;font-weight:normal;line-height:13px;letter-spacing:0.200px;">Hw</div>
<div style="position:absolute;left:40px;top:202px;width:78px;height:16px;background:#000080;"></div>
<div style="position:absolute;left:40px;top:202px;width:78px;height:16px;box-sizing:border-box;border:1px dotted #c0c0ff"></div>
<div class="t" style="left:42.70px;top:203.69px;color:#fff;font-size:11px;font-weight:normal;line-height:13px;letter-spacing:-0.277px;">Výběr řady PLC</div>
<div class="t" style="left:42.70px;top:219.69px;color:#000;font-size:11px;font-weight:normal;line-height:13px;letter-spacing:-0.108px;">Konfigurace HW</div>
<div class="t" style="left:42.70px;top:235.69px;color:#000;font-size:11px;font-weight:normal;line-height:13px;letter-spacing:-0.173px;">Síť PLC - logické propojení</div>
<div class="t" style="left:23.70px;top:251.69px;color:#000;font-size:11px;font-weight:normal;line-height:13px;letter-spacing:0.200px;">Sw</div>
<div class="t" style="left:42.70px;top:267.69px;color:#000;font-size:11px;font-weight:normal;line-height:13px;letter-spacing:-0.283px;">Program</div>
<div class="t" style="left:42.30px;top:283.69px;color:#000;font-size:11px;font-weight:normal;line-height:13px;letter-spacing:0.350px;">Cpm</div>
<div class="t" style="left:42.70px;top:299.69px;color:#000;font-size:11px;font-weight:normal;line-height:13px;letter-spacing:0.113px;">Překladač</div>
<div class="t" style="left:42.70px;top:315.69px;color:#000;font-size:11px;font-weight:normal;line-height:13px;letter-spacing:-0.232px;">Posílání souborů do PLC</div>
<div class="t" style="left:23.70px;top:331.69px;color:#000;font-size:11px;font-weight:normal;line-height:13px;letter-spacing:-0.175px;">Prostředí</div>
<div class="t" style="left:23.70px;top:347.69px;color:#000;font-size:11px;font-weight:normal;line-height:13px;letter-spacing:0.000px;">Dokumentace</div>
<div style="position:absolute;left:175px;top:104px;width:1px;height:574px;background:#ffffff;"></div>
<div style="position:absolute;left:179px;top:131px;width:1px;height:547px;background:#ffffff;"></div>
<div style="position:absolute;left:176px;top:128px;width:838px;height:1px;background:#808080;"></div>
<div style="position:absolute;left:176px;top:131px;width:838px;height:1px;background:#ffffff;"></div>
<div style="position:absolute;left:175px;top:104px;width:97px;height:25px;background:#c0c0c0;"></div>
<div style="position:absolute;left:175px;top:104px;width:96px;height:1px;background:#ffffff;"></div>
<div style="position:absolute;left:175px;top:104px;width:1px;height:24px;background:#ffffff;"></div>
<div style="position:absolute;left:271px;top:104px;width:1px;height:25px;background:#000;"></div>
<div style="position:absolute;left:175px;top:128px;width:97px;height:1px;background:#000;"></div>
<div style="position:absolute;left:270px;top:105px;width:1px;height:23px;background:#808080;"></div>
<div style="position:absolute;left:176px;top:127px;width:95px;height:1px;background:#808080;"></div>
<div style="position:absolute;left:272px;top:104px;width:1px;height:24px;background:#ffffff;"></div>
<svg style="position:absolute;left:200px;top:110px" width="13" height="15" viewBox="0 0 13 15" shape-rendering="crispEdges"><rect x="5" y="0" width="2" height="7" fill="#808080"/><rect x="7" y="1" width="1" height="6" fill="#ffffff"/><rect x="5" y="8" width="2" height="1" fill="#808080"/><path d="M1.5 13.5 L1.5 11 Q1.5 8.5 4 8.5 L8 8.5 Q10.5 8.5 10.5 11 L10.5 13.5" fill="none" stroke="#808080" stroke-width="1.2" shape-rendering="auto"/><rect x="4" y="11" width="2" height="1" fill="#808080"/><rect x="7" y="11" width="2" height="1" fill="#808080"/><rect x="2" y="14" width="10" height="1" fill="#ffffff"/><rect x="11" y="10" width="1" height="4" fill="#ffffff"/></svg>
<div class="t" style="left:220.20px;top:110.99px;color:#fff;font-size:11px;font-weight:normal;line-height:13px;letter-spacing:0.040px;">Použít</div>
<div class="t" style="left:219.20px;top:109.99px;color:#808080;font-size:11px;font-weight:normal;line-height:13px;letter-spacing:0.040px;">Použít</div>
<div style="position:absolute;left:229px;top:124px;width:5px;height:1px;background:#ffffff;"></div>
<div style="position:absolute;left:228px;top:123px;width:5px;height:1px;background:#808080;"></div>
<svg style="position:absolute;left:187px;top:135px" width="8" height="14" viewBox="0 0 8 14" shape-rendering="crispEdges"><circle cx="4.5" cy="2" r="1.8" fill="#000080" shape-rendering="auto"/><path d="M1.5 5.5 L5 5.5 L4 11.5 Q4 12.5 6.5 11.5" fill="none" stroke="#000080" stroke-width="2" shape-rendering="auto"/><rect x="1" y="5" width="3" height="1" fill="#000080"/></svg>
<svg style="position:absolute;left:200px;top:136px" width="12" height="12" viewBox="0 0 12 12" shape-rendering="crispEdges"><rect x="4" y="0" width="1" height="1" fill="#808080"/><rect x="5" y="0" width="1" height="1" fill="#808080"/><rect x="6" y="0" width="1" height="1" fill="#808080"/><rect x="7" y="0" width="1" height="1" fill="#808080"/><rect x="2" y="1" width="1" height="1" fill="#808080"/><rect x="3" y="1" width="1" height="1" fill="#808080"/><rect x="4" y="1" width="1" height="1" fill="#000"/><rect x="5" y="1" width="1" height="1" fill="#000"/><rect x="6" y="1" width="1" height="1" fill="#000"/><rect x="7" y="1" width="1" height="1" fill="#000"/><rect x="8" y="1" width="1" height="1" fill="#808080"/><rect x="9" y="1" width="1" height="1" fill="#808080"/><rect x="1" y="2" width="1" height="1" fill="#808080"/><rect x="2" y="2" width="1" height="1" fill="#000"/><rect x="3" y="2" width="1" height="1" fill="#000"/><rect x="4" y="2" width="1" height="1" fill="#ffffff"/><rect x="5" y="2" width="1" height="1" fill="#ffffff"/><rect x="6" y="2" width="1" height="1" fill="#ffffff"/><rect x="7" y="2" width="1" height="1" fill="#ffffff"/><rect x="8" y="2" width="1" height="1" fill="#000"/><rect x="9" y="2" width="1" height="1" fill="#000"/><rect x="10" y="2" width="1" height="1" fill="#ffffff"/><rect x="1" y="3" width="1" height="1" fill="#808080"/><rect x="2" y="3" width="1" height="1" fill="#000"/><rect x="3" y="3" width="1" height="1" fill="#ffffff"/><rect x="4" y="3" width="1" height="1" fill="#ffffff"/><rect x="5" y="3" width="1" height="1" fill="#ffffff"/><rect x="6" y="3" width="1" height="1" fill="#ffffff"/><rect x="7" y="3" width="1" height="1" fill="#ffffff"/><rect x="8" y="3" width="1" height="1" fill="#ffffff"/><rect x="9" y="3" width="1" height="1" fill="#dfdfdf"/><rect x="10" y="3" width="1" height="1" fill="#ffffff"/><rect x="0" y="4" width="1" height="1" fill="#808080"/><rect x="1" y="4" width="1" height="1" fill="#000"/><rect x="2" y="4" width="1" height="1" fill="#ffffff"/><rect x="3" y="4" width="1" height="1" fill="#ffffff"/><rect x="4" y="4" width="1" height="1" fill="#ffffff"/><rect x="5" y="4" width="1" height="1" fill="#ffffff"/><rect x="6" y="4" width="1" height="1" fill="#ffffff"/><rect x="7" y="4" width="1" height="1" fill="#ffffff"/><rect x="8" y="4" width="1" height="1" fill="#ffffff"/><rect x="9" y="4" width="1" height="1" fill="#ffffff"/><rect x="10" y="4" width="1" height="1" fill="#dfdfdf"/><rect x="11" y="4" width="1" height="1" fill="#ffffff"/><rect x="0" y="5" width="1" height="1" fill="#808080"/><rect x="1" y="5" width="1" height="1" fill="#000"/><rect x="2" y="5" width="1" height="1" fill="#ffffff"/><rect x="3" y="5" width="1" height="1" fill="#ffffff"/><rect x="4" y="5" width="1" height="1" fill="#ffffff"/><rect x="5" y="5" width="1" height="1" fill="#ffffff"/><rect x="6" y="5" width="1" height="1" fill="#ffffff"/><rect x="7" y="5" width="1" height="1" fill="#ffffff"/><rect x="8" y="5" width="1" height="1" fill="#ffffff"/><rect x="9" y="5" width="1" height="1" fill="#ffffff"/><rect x="10" y="5" width="1" height="1" fill="#dfdfdf"/><rect x="11" y="5" width="1" height="1" fill="#ffffff"/><rect x="0" y="6" width="1" height="1" fill="#808080"/><rect x="1" y="6" width="1" height="1" fill="#000"/><rect x="2" y="6" width="1" height="1" fill="#ffffff"/><rect x="3" y="6" width="1" height="1" fill="#ffffff"/><rect x="4" y="6" width="1" height="1" fill="#ffffff"/><rect x="5" y="6" width="1" height="1" fill="#ffffff"/><rect x="6" y="6" width="1" height="1" fill="#ffffff"/><rect x="7" y="6" width="1" height="1" fill="#ffffff"/><rect x="8" y="6" width="1" height="1" fill="#ffffff"/><rect x="9" y="6" width="1" height="1" fill="#ffffff"/><rect x="10" y="6" width="1" height="1" fill="#dfdfdf"/><rect x="11" y="6" width="1" height="1" fill="#ffffff"/><rect x="0" y="7" width="1" height="1" fill="#808080"/><rect x="1" y="7" width="1" height="1" fill="#000"/><rect x="2" y="7" width="1" height="1" fill="#ffffff"/><rect x="3" y="7" width="1" height="1" fill="#ffffff"/><rect x="4" y="7" width="1" height="1" fill="#ffffff"/><rect x="5" y="7" width="1" height="1" fill="#ffffff"/><rect x="6" y="7" width="1" height="1" fill="#ffffff"/><rect x="7" y="7" width="1" height="1" fill="#ffffff"/><rect x="8" y="7" width="1" height="1" fill="#ffffff"/><rect x="9" y="7" width="1" height="1" fill="#ffffff"/><rect x="10" y="7" width="1" height="1" fill="#dfdfdf"/><rect x="11" y="7" width="1" height="1" fill="#ffffff"/><rect x="1" y="8" width="1" height="1" fill="#808080"/><rect x="2" y="8" width="1" height="1" fill="#000"/><rect x="3" y="8" width="1" height="1" fill="#ffffff"/><rect x="4" y="8" width="1" height="1" fill="#ffffff"/><rect x="5" y="8" width="1" height="1" fill="#ffffff"/><rect x="6" y="8" width="1" height="1" fill="#ffffff"/><rect x="7" y="8" width="1" height="1" fill="#ffffff"/><rect x="8" y="8" width="1" height="1" fill="#ffffff"/><rect x="9" y="8" width="1" height="1" fill="#dfdfdf"/><rect x="10" y="8" width="1" height="1" fill="#ffffff"/><rect x="1" y="9" width="1" height="1" fill="#ffffff"/><rect x="2" y="9" width="1" height="1" fill="#dfdfdf"/><rect x="3" y="9" width="1" height="1" fill="#dfdfdf"/><rect x="4" y="9" width="1" height="1" fill="#ffffff"/><rect x="5" y="9" width="1" height="1" fill="#ffffff"/><rect x="6" y="9" width="1" height="1" fill="#ffffff"/><rect x="7" y="9" width="1" height="1" fill="#ffffff"/><rect x="8" y="9" width="1" height="1" fill="#dfdfdf"/><rect x="9" y="9" width="1" height="1" fill="#dfdfdf"/><rect x="10" y="9" width="1" height="1" fill="#ffffff"/><rect x="2" y="10" width="1" height="1" fill="#ffffff"/><rect x="3" y="10" width="1" height="1" fill="#ffffff"/><rect x="4" y="10" width="1" height="1" fill="#dfdfdf"/><rect x="5" y="10" width="1" height="1" fill="#dfdfdf"/><rect x="6" y="10" width="1" height="1" fill="#dfdfdf"/><rect x="7" y="10" width="1" height="1" fill="#dfdfdf"/><rect x="8" y="10" width="1" height="1" fill="#ffffff"/><rect x="9" y="10" width="1" height="1" fill="#ffffff"/><rect x="4" y="11" width="1" height="1" fill="#ffffff"/><rect x="5" y="11" width="1" height="1" fill="#ffffff"/><rect x="6" y="11" width="1" height="1" fill="#ffffff"/><rect x="7" y="11" width="1" height="1" fill="#ffffff"/><rect x="4" y="5" width="4" height="2" fill="#000"/><rect x="5" y="4" width="2" height="4" fill="#000"/></svg>
<div class="t" style="left:217.70px;top:135.19px;color:#000;font-size:11px;font-weight:normal;line-height:13px;letter-spacing:-0.127px;">Vytvářet konfig. soubor PLC</div>
<div style="position:absolute;left:218px;top:147px;width:7px;height:1px;background:#000;"></div>
<svg style="position:absolute;left:759px;top:136px" width="12" height="12" viewBox="0 0 12 12" shape-rendering="crispEdges"><rect x="4" y="0" width="1" height="1" fill="#808080"/><rect x="5" y="0" width="1" height="1" fill="#808080"/><rect x="6" y="0" width="1" height="1" fill="#808080"/><rect x="7" y="0" width="1" height="1" fill="#808080"/><rect x="2" y="1" width="1" height="1" fill="#808080"/><rect x="3" y="1" width="1" height="1" fill="#808080"/><rect x="4" y="1" width="1" height="1" fill="#000"/><rect x="5" y="1" width="1" height="1" fill="#000"/><rect x="6" y="1" width="1" height="1" fill="#000"/><rect x="7" y="1" width="1" height="1" fill="#000"/><rect x="8" y="1" width="1" height="1" fill="#808080"/><rect x="9" y="1" width="1" height="1" fill="#808080"/><rect x="1" y="2" width="1" height="1" fill="#808080"/><rect x="2" y="2" width="1" height="1" fill="#000"/><rect x="3" y="2" width="1" height="1" fill="#000"/><rect x="4" y="2" width="1" height="1" fill="#ffffff"/><rect x="5" y="2" width="1" height="1" fill="#ffffff"/><rect x="6" y="2" width="1" height="1" fill="#ffffff"/><rect x="7" y="2" width="1" height="1" fill="#ffffff"/><rect x="8" y="2" width="1" height="1" fill="#000"/><rect x="9" y="2" width="1" height="1" fill="#000"/><rect x="10" y="2" width="1" height="1" fill="#ffffff"/><rect x="1" y="3" width="1" height="1" fill="#808080"/><rect x="2" y="3" width="1" height="1" fill="#000"/><rect x="3" y="3" width="1" height="1" fill="#ffffff"/><rect x="4" y="3" width="1" height="1" fill="#ffffff"/><rect x="5" y="3" width="1" height="1" fill="#ffffff"/><rect x="6" y="3" width="1" height="1" fill="#ffffff"/><rect x="7" y="3" width="1" height="1" fill="#ffffff"/><rect x="8" y="3" width="1" height="1" fill="#ffffff"/><rect x="9" y="3" width="1" height="1" fill="#dfdfdf"/><rect x="10" y="3" width="1" height="1" fill="#ffffff"/><rect x="0" y="4" width="1" height="1" fill="#808080"/><rect x="1" y="4" width="1" height="1" fill="#000"/><rect x="2" y="4" width="1" height="1" fill="#ffffff"/><rect x="3" y="4" width="1" height="1" fill="#ffffff"/><rect x="4" y="4" width="1" height="1" fill="#ffffff"/><rect x="5" y="4" width="1" height="1" fill="#ffffff"/><rect x="6" y="4" width="1" height="1" fill="#ffffff"/><rect x="7" y="4" width="1" height="1" fill="#ffffff"/><rect x="8" y="4" width="1" height="1" fill="#ffffff"/><rect x="9" y="4" width="1" height="1" fill="#ffffff"/><rect x="10" y="4" width="1" height="1" fill="#dfdfdf"/><rect x="11" y="4" width="1" height="1" fill="#ffffff"/><rect x="0" y="5" width="1" height="1" fill="#808080"/><rect x="1" y="5" width="1" height="1" fill="#000"/><rect x="2" y="5" width="1" height="1" fill="#ffffff"/><rect x="3" y="5" width="1" height="1" fill="#ffffff"/><rect x="4" y="5" width="1" height="1" fill="#ffffff"/><rect x="5" y="5" width="1" height="1" fill="#ffffff"/><rect x="6" y="5" width="1" height="1" fill="#ffffff"/><rect x="7" y="5" width="1" height="1" fill="#ffffff"/><rect x="8" y="5" width="1" height="1" fill="#ffffff"/><rect x="9" y="5" width="1" height="1" fill="#ffffff"/><rect x="10" y="5" width="1" height="1" fill="#dfdfdf"/><rect x="11" y="5" width="1" height="1" fill="#ffffff"/><rect x="0" y="6" width="1" height="1" fill="#808080"/><rect x="1" y="6" width="1" height="1" fill="#000"/><rect x="2" y="6" width="1" height="1" fill="#ffffff"/><rect x="3" y="6" width="1" height="1" fill="#ffffff"/><rect x="4" y="6" width="1" height="1" fill="#ffffff"/><rect x="5" y="6" width="1" height="1" fill="#ffffff"/><rect x="6" y="6" width="1" height="1" fill="#ffffff"/><rect x="7" y="6" width="1" height="1" fill="#ffffff"/><rect x="8" y="6" width="1" height="1" fill="#ffffff"/><rect x="9" y="6" width="1" height="1" fill="#ffffff"/><rect x="10" y="6" width="1" height="1" fill="#dfdfdf"/><rect x="11" y="6" width="1" height="1" fill="#ffffff"/><rect x="0" y="7" width="1" height="1" fill="#808080"/><rect x="1" y="7" width="1" height="1" fill="#000"/><rect x="2" y="7" width="1" height="1" fill="#ffffff"/><rect x="3" y="7" width="1" height="1" fill="#ffffff"/><rect x="4" y="7" width="1" height="1" fill="#ffffff"/><rect x="5" y="7" width="1" height="1" fill="#ffffff"/><rect x="6" y="7" width="1" height="1" fill="#ffffff"/><rect x="7" y="7" width="1" height="1" fill="#ffffff"/><rect x="8" y="7" width="1" height="1" fill="#ffffff"/><rect x="9" y="7" width="1" height="1" fill="#ffffff"/><rect x="10" y="7" width="1" height="1" fill="#dfdfdf"/><rect x="11" y="7" width="1" height="1" fill="#ffffff"/><rect x="1" y="8" width="1" height="1" fill="#808080"/><rect x="2" y="8" width="1" height="1" fill="#000"/><rect x="3" y="8" width="1" height="1" fill="#ffffff"/><rect x="4" y="8" width="1" height="1" fill="#ffffff"/><rect x="5" y="8" width="1" height="1" fill="#ffffff"/><rect x="6" y="8" width="1" height="1" fill="#ffffff"/><rect x="7" y="8" width="1" height="1" fill="#ffffff"/><rect x="8" y="8" width="1" height="1" fill="#ffffff"/><rect x="9" y="8" width="1" height="1" fill="#dfdfdf"/><rect x="10" y="8" width="1" height="1" fill="#ffffff"/><rect x="1" y="9" width="1" height="1" fill="#ffffff"/><rect x="2" y="9" width="1" height="1" fill="#dfdfdf"/><rect x="3" y="9" width="1" height="1" fill="#dfdfdf"/><rect x="4" y="9" width="1" height="1" fill="#ffffff"/><rect x="5" y="9" width="1" height="1" fill="#ffffff"/><rect x="6" y="9" width="1" height="1" fill="#ffffff"/><rect x="7" y="9" width="1" height="1" fill="#ffffff"/><rect x="8" y="9" width="1" height="1" fill="#dfdfdf"/><rect x="9" y="9" width="1" height="1" fill="#dfdfdf"/><rect x="10" y="9" width="1" height="1" fill="#ffffff"/><rect x="2" y="10" width="1" height="1" fill="#ffffff"/><rect x="3" y="10" width="1" height="1" fill="#ffffff"/><rect x="4" y="10" width="1" height="1" fill="#dfdfdf"/><rect x="5" y="10" width="1" height="1" fill="#dfdfdf"/><rect x="6" y="10" width="1" height="1" fill="#dfdfdf"/><rect x="7" y="10" width="1" height="1" fill="#dfdfdf"/><rect x="8" y="10" width="1" height="1" fill="#ffffff"/><rect x="9" y="10" width="1" height="1" fill="#ffffff"/><rect x="4" y="11" width="1" height="1" fill="#ffffff"/><rect x="5" y="11" width="1" height="1" fill="#ffffff"/><rect x="6" y="11" width="1" height="1" fill="#ffffff"/><rect x="7" y="11" width="1" height="1" fill="#ffffff"/></svg>
<div class="t" style="left:776.00px;top:135.19px;color:#000;font-size:11px;font-weight:normal;line-height:13px;letter-spacing:-0.186px;">Konfiguraci nelze měnit</div>
<div style="position:absolute;left:188px;top:165px;width:830px;height:1px;background:#808080;"></div>
<div style="position:absolute;left:189px;top:166px;width:830px;height:1px;background:#ffffff;"></div>
<div style="position:absolute;left:188px;top:165px;width:1px;height:35px;background:#808080;"></div>
<div style="position:absolute;left:189px;top:166px;width:1px;height:34px;background:#ffffff;"></div>
<div style="position:absolute;left:188px;top:199px;width:830px;height:1px;background:#808080;"></div>
<div style="position:absolute;left:188px;top:200px;width:830px;height:1px;background:#ffffff;"></div>
<div style="position:absolute;left:194px;top:159px;width:154px;height:12px;background:#c0c0c0;"></div>
<div class="t" style="left:196.20px;top:160.69px;color:#000;font-size:11px;font-weight:normal;line-height:13px;letter-spacing:-0.110px;">Základní výběr řídicího systému</div>
<svg style="position:absolute;left:198px;top:178px" width="12" height="12" viewBox="0 0 12 12" shape-rendering="crispEdges"><rect x="4" y="0" width="1" height="1" fill="#808080"/><rect x="5" y="0" width="1" height="1" fill="#808080"/><rect x="6" y="0" width="1" height="1" fill="#808080"/><rect x="7" y="0" width="1" height="1" fill="#808080"/><rect x="2" y="1" width="1" height="1" fill="#808080"/><rect x="3" y="1" width="1" height="1" fill="#808080"/><rect x="4" y="1" width="1" height="1" fill="#000"/><rect x="5" y="1" width="1" height="1" fill="#000"/><rect x="6" y="1" width="1" height="1" fill="#000"/><rect x="7" y="1" width="1" height="1" fill="#000"/><rect x="8" y="1" width="1" height="1" fill="#808080"/><rect x="9" y="1" width="1" height="1" fill="#808080"/><rect x="1" y="2" width="1" height="1" fill="#808080"/><rect x="2" y="2" width="1" height="1" fill="#000"/><rect x="3" y="2" width="1" height="1" fill="#000"/><rect x="4" y="2" width="1" height="1" fill="#ffffff"/><rect x="5" y="2" width="1" height="1" fill="#ffffff"/><rect x="6" y="2" width="1" height="1" fill="#ffffff"/><rect x="7" y="2" width="1" height="1" fill="#ffffff"/><rect x="8" y="2" width="1" height="1" fill="#000"/><rect x="9" y="2" width="1" height="1" fill="#000"/><rect x="10" y="2" width="1" height="1" fill="#ffffff"/><rect x="1" y="3" width="1" height="1" fill="#808080"/><rect x="2" y="3" width="1" height="1" fill="#000"/><rect x="3" y="3" width="1" height="1" fill="#ffffff"/><rect x="4" y="3" width="1" height="1" fill="#ffffff"/><rect x="5" y="3" width="1" height="1" fill="#ffffff"/><rect x="6" y="3" width="1" height="1" fill="#ffffff"/><rect x="7" y="3" width="1" height="1" fill="#ffffff"/><rect x="8" y="3" width="1" height="1" fill="#ffffff"/><rect x="9" y="3" width="1" height="1" fill="#dfdfdf"/><rect x="10" y="3" width="1" height="1" fill="#ffffff"/><rect x="0" y="4" width="1" height="1" fill="#808080"/><rect x="1" y="4" width="1" height="1" fill="#000"/><rect x="2" y="4" width="1" height="1" fill="#ffffff"/><rect x="3" y="4" width="1" height="1" fill="#ffffff"/><rect x="4" y="4" width="1" height="1" fill="#ffffff"/><rect x="5" y="4" width="1" height="1" fill="#ffffff"/><rect x="6" y="4" width="1" height="1" fill="#ffffff"/><rect x="7" y="4" width="1" height="1" fill="#ffffff"/><rect x="8" y="4" width="1" height="1" fill="#ffffff"/><rect x="9" y="4" width="1" height="1" fill="#ffffff"/><rect x="10" y="4" width="1" height="1" fill="#dfdfdf"/><rect x="11" y="4" width="1" height="1" fill="#ffffff"/><rect x="0" y="5" width="1" height="1" fill="#808080"/><rect x="1" y="5" width="1" height="1" fill="#000"/><rect x="2" y="5" width="1" height="1" fill="#ffffff"/><rect x="3" y="5" width="1" height="1" fill="#ffffff"/><rect x="4" y="5" width="1" height="1" fill="#ffffff"/><rect x="5" y="5" width="1" height="1" fill="#ffffff"/><rect x="6" y="5" width="1" height="1" fill="#ffffff"/><rect x="7" y="5" width="1" height="1" fill="#ffffff"/><rect x="8" y="5" width="1" height="1" fill="#ffffff"/><rect x="9" y="5" width="1" height="1" fill="#ffffff"/><rect x="10" y="5" width="1" height="1" fill="#dfdfdf"/><rect x="11" y="5" width="1" height="1" fill="#ffffff"/><rect x="0" y="6" width="1" height="1" fill="#808080"/><rect x="1" y="6" width="1" height="1" fill="#000"/><rect x="2" y="6" width="1" height="1" fill="#ffffff"/><rect x="3" y="6" width="1" height="1" fill="#ffffff"/><rect x="4" y="6" width="1" height="1" fill="#ffffff"/><rect x="5" y="6" width="1" height="1" fill="#ffffff"/><rect x="6" y="6" width="1" height="1" fill="#ffffff"/><rect x="7" y="6" width="1" height="1" fill="#ffffff"/><rect x="8" y="6" width="1" height="1" fill="#ffffff"/><rect x="9" y="6" width="1" height="1" fill="#ffffff"/><rect x="10" y="6" width="1" height="1" fill="#dfdfdf"/><rect x="11" y="6" width="1" height="1" fill="#ffffff"/><rect x="0" y="7" width="1" height="1" fill="#808080"/><rect x="1" y="7" width="1" height="1" fill="#000"/><rect x="2" y="7" width="1" height="1" fill="#ffffff"/><rect x="3" y="7" width="1" height="1" fill="#ffffff"/><rect x="4" y="7" width="1" height="1" fill="#ffffff"/><rect x="5" y="7" width="1" height="1" fill="#ffffff"/><rect x="6" y="7" width="1" height="1" fill="#ffffff"/><rect x="7" y="7" width="1" height="1" fill="#ffffff"/><rect x="8" y="7" width="1" height="1" fill="#ffffff"/><rect x="9" y="7" width="1" height="1" fill="#ffffff"/><rect x="10" y="7" width="1" height="1" fill="#dfdfdf"/><rect x="11" y="7" width="1" height="1" fill="#ffffff"/><rect x="1" y="8" width="1" height="1" fill="#808080"/><rect x="2" y="8" width="1" height="1" fill="#000"/><rect x="3" y="8" width="1" height="1" fill="#ffffff"/><rect x="4" y="8" width="1" height="1" fill="#ffffff"/><rect x="5" y="8" width="1" height="1" fill="#ffffff"/><rect x="6" y="8" width="1" height="1" fill="#ffffff"/><rect x="7" y="8" width="1" height="1" fill="#ffffff"/><rect x="8" y="8" width="1" height="1" fill="#ffffff"/><rect x="9" y="8" width="1" height="1" fill="#dfdfdf"/><rect x="10" y="8" width="1" height="1" fill="#ffffff"/><rect x="1" y="9" width="1" height="1" fill="#ffffff"/><rect x="2" y="9" width="1" height="1" fill="#dfdfdf"/><rect x="3" y="9" width="1" height="1" fill="#dfdfdf"/><rect x="4" y="9" width="1" height="1" fill="#ffffff"/><rect x="5" y="9" width="1" height="1" fill="#ffffff"/><rect x="6" y="9" width="1" height="1" fill="#ffffff"/><rect x="7" y="9" width="1" height="1" fill="#ffffff"/><rect x="8" y="9" width="1" height="1" fill="#dfdfdf"/><rect x="9" y="9" width="1" height="1" fill="#dfdfdf"/><rect x="10" y="9" width="1" height="1" fill="#ffffff"/><rect x="2" y="10" width="1" height="1" fill="#ffffff"/><rect x="3" y="10" width="1" height="1" fill="#ffffff"/><rect x="4" y="10" width="1" height="1" fill="#dfdfdf"/><rect x="5" y="10" width="1" height="1" fill="#dfdfdf"/><rect x="6" y="10" width="1" height="1" fill="#dfdfdf"/><rect x="7" y="10" width="1" height="1" fill="#dfdfdf"/><rect x="8" y="10" width="1" height="1" fill="#ffffff"/><rect x="9" y="10" width="1" height="1" fill="#ffffff"/><rect x="4" y="11" width="1" height="1" fill="#ffffff"/><rect x="5" y="11" width="1" height="1" fill="#ffffff"/><rect x="6" y="11" width="1" height="1" fill="#ffffff"/><rect x="7" y="11" width="1" height="1" fill="#ffffff"/><rect x="4" y="5" width="4" height="2" fill="#000"/><rect x="5" y="4" width="2" height="4" fill="#000"/></svg>
<div class="t" style="left:215.30px;top:177.69px;color:#000;font-size:11px;font-weight:normal;line-height:13px;letter-spacing:-0.313px;">modulární systém</div>
<svg style="position:absolute;left:404px;top:178px" width="12" height="12" viewBox="0 0 12 12" shape-rendering="crispEdges"><rect x="4" y="0" width="1" height="1" fill="#808080"/><rect x="5" y="0" width="1" height="1" fill="#808080"/><rect x="6" y="0" width="1" height="1" fill="#808080"/><rect x="7" y="0" width="1" height="1" fill="#808080"/><rect x="2" y="1" width="1" height="1" fill="#808080"/><rect x="3" y="1" width="1" height="1" fill="#808080"/><rect x="4" y="1" width="1" height="1" fill="#000"/><rect x="5" y="1" width="1" height="1" fill="#000"/><rect x="6" y="1" width="1" height="1" fill="#000"/><rect x="7" y="1" width="1" height="1" fill="#000"/><rect x="8" y="1" width="1" height="1" fill="#808080"/><rect x="9" y="1" width="1" height="1" fill="#808080"/><rect x="1" y="2" width="1" height="1" fill="#808080"/><rect x="2" y="2" width="1" height="1" fill="#000"/><rect x="3" y="2" width="1" height="1" fill="#000"/><rect x="4" y="2" width="1" height="1" fill="#ffffff"/><rect x="5" y="2" width="1" height="1" fill="#ffffff"/><rect x="6" y="2" width="1" height="1" fill="#ffffff"/><rect x="7" y="2" width="1" height="1" fill="#ffffff"/><rect x="8" y="2" width="1" height="1" fill="#000"/><rect x="9" y="2" width="1" height="1" fill="#000"/><rect x="10" y="2" width="1" height="1" fill="#ffffff"/><rect x="1" y="3" width="1" height="1" fill="#808080"/><rect x="2" y="3" width="1" height="1" fill="#000"/><rect x="3" y="3" width="1" height="1" fill="#ffffff"/><rect x="4" y="3" width="1" height="1" fill="#ffffff"/><rect x="5" y="3" width="1" height="1" fill="#ffffff"/><rect x="6" y="3" width="1" height="1" fill="#ffffff"/><rect x="7" y="3" width="1" height="1" fill="#ffffff"/><rect x="8" y="3" width="1" height="1" fill="#ffffff"/><rect x="9" y="3" width="1" height="1" fill="#dfdfdf"/><rect x="10" y="3" width="1" height="1" fill="#ffffff"/><rect x="0" y="4" width="1" height="1" fill="#808080"/><rect x="1" y="4" width="1" height="1" fill="#000"/><rect x="2" y="4" width="1" height="1" fill="#ffffff"/><rect x="3" y="4" width="1" height="1" fill="#ffffff"/><rect x="4" y="4" width="1" height="1" fill="#ffffff"/><rect x="5" y="4" width="1" height="1" fill="#ffffff"/><rect x="6" y="4" width="1" height="1" fill="#ffffff"/><rect x="7" y="4" width="1" height="1" fill="#ffffff"/><rect x="8" y="4" width="1" height="1" fill="#ffffff"/><rect x="9" y="4" width="1" height="1" fill="#ffffff"/><rect x="10" y="4" width="1" height="1" fill="#dfdfdf"/><rect x="11" y="4" width="1" height="1" fill="#ffffff"/><rect x="0" y="5" width="1" height="1" fill="#808080"/><rect x="1" y="5" width="1" height="1" fill="#000"/><rect x="2" y="5" width="1" height="1" fill="#ffffff"/><rect x="3" y="5" width="1" height="1" fill="#ffffff"/><rect x="4" y="5" width="1" height="1" fill="#ffffff"/><rect x="5" y="5" width="1" height="1" fill="#ffffff"/><rect x="6" y="5" width="1" height="1" fill="#ffffff"/><rect x="7" y="5" width="1" height="1" fill="#ffffff"/><rect x="8" y="5" width="1" height="1" fill="#ffffff"/><rect x="9" y="5" width="1" height="1" fill="#ffffff"/><rect x="10" y="5" width="1" height="1" fill="#dfdfdf"/><rect x="11" y="5" width="1" height="1" fill="#ffffff"/><rect x="0" y="6" width="1" height="1" fill="#808080"/><rect x="1" y="6" width="1" height="1" fill="#000"/><rect x="2" y="6" width="1" height="1" fill="#ffffff"/><rect x="3" y="6" width="1" height="1" fill="#ffffff"/><rect x="4" y="6" width="1" height="1" fill="#ffffff"/><rect x="5" y="6" width="1" height="1" fill="#ffffff"/><rect x="6" y="6" width="1" height="1" fill="#ffffff"/><rect x="7" y="6" width="1" height="1" fill="#ffffff"/><rect x="8" y="6" width="1" height="1" fill="#ffffff"/><rect x="9" y="6" width="1" height="1" fill="#ffffff"/><rect x="10" y="6" width="1" height="1" fill="#dfdfdf"/><rect x="11" y="6" width="1" height="1" fill="#ffffff"/><rect x="0" y="7" width="1" height="1" fill="#808080"/><rect x="1" y="7" width="1" height="1" fill="#000"/><rect x="2" y="7" width="1" height="1" fill="#ffffff"/><rect x="3" y="7" width="1" height="1" fill="#ffffff"/><rect x="4" y="7" width="1" height="1" fill="#ffffff"/><rect x="5" y="7" width="1" height="1" fill="#ffffff"/><rect x="6" y="7" width="1" height="1" fill="#ffffff"/><rect x="7" y="7" width="1" height="1" fill="#ffffff"/><rect x="8" y="7" width="1" height="1" fill="#ffffff"/><rect x="9" y="7" width="1" height="1" fill="#ffffff"/><rect x="10" y="7" width="1" height="1" fill="#dfdfdf"/><rect x="11" y="7" width="1" height="1" fill="#ffffff"/><rect x="1" y="8" width="1" height="1" fill="#808080"/><rect x="2" y="8" width="1" height="1" fill="#000"/><rect x="3" y="8" width="1" height="1" fill="#ffffff"/><rect x="4" y="8" width="1" height="1" fill="#ffffff"/><rect x="5" y="8" width="1" height="1" fill="#ffffff"/><rect x="6" y="8" width="1" height="1" fill="#ffffff"/><rect x="7" y="8" width="1" height="1" fill="#ffffff"/><rect x="8" y="8" width="1" height="1" fill="#ffffff"/><rect x="9" y="8" width="1" height="1" fill="#dfdfdf"/><rect x="10" y="8" width="1" height="1" fill="#ffffff"/><rect x="1" y="9" width="1" height="1" fill="#ffffff"/><rect x="2" y="9" width="1" height="1" fill="#dfdfdf"/><rect x="3" y="9" width="1" height="1" fill="#dfdfdf"/><rect x="4" y="9" width="1" height="1" fill="#ffffff"/><rect x="5" y="9" width="1" height="1" fill="#ffffff"/><rect x="6" y="9" width="1" height="1" fill="#ffffff"/><rect x="7" y="9" width="1" height="1" fill="#ffffff"/><rect x="8" y="9" width="1" height="1" fill="#dfdfdf"/><rect x="9" y="9" width="1" height="1" fill="#dfdfdf"/><rect x="10" y="9" width="1" height="1" fill="#ffffff"/><rect x="2" y="10" width="1" height="1" fill="#ffffff"/><rect x="3" y="10" width="1" height="1" fill="#ffffff"/><rect x="4" y="10" width="1" height="1" fill="#dfdfdf"/><rect x="5" y="10" width="1" height="1" fill="#dfdfdf"/><rect x="6" y="10" width="1" height="1" fill="#dfdfdf"/><rect x="7" y="10" width="1" height="1" fill="#dfdfdf"/><rect x="8" y="10" width="1" height="1" fill="#ffffff"/><rect x="9" y="10" width="1" height="1" fill="#ffffff"/><rect x="4" y="11" width="1" height="1" fill="#ffffff"/><rect x="5" y="11" width="1" height="1" fill="#ffffff"/><rect x="6" y="11" width="1" height="1" fill="#ffffff"/><rect x="7" y="11" width="1" height="1" fill="#ffffff"/></svg>
<div class="t" style="left:421.10px;top:177.69px;color:#000;font-size:11px;font-weight:normal;line-height:13px;letter-spacing:-0.160px;">kompaktní systém</div>
<svg style="position:absolute;left:610px;top:178px" width="12" height="12" viewBox="0 0 12 12" shape-rendering="crispEdges"><rect x="4" y="0" width="1" height="1" fill="#808080"/><rect x="5" y="0" width="1" height="1" fill="#808080"/><rect x="6" y="0" width="1" height="1" fill="#808080"/><rect x="7" y="0" width="1" height="1" fill="#808080"/><rect x="2" y="1" width="1" height="1" fill="#808080"/><rect x="3" y="1" width="1" height="1" fill="#808080"/><rect x="4" y="1" width="1" height="1" fill="#000"/><rect x="5" y="1" width="1" height="1" fill="#000"/><rect x="6" y="1" width="1" height="1" fill="#000"/><rect x="7" y="1" width="1" height="1" fill="#000"/><rect x="8" y="1" width="1" height="1" fill="#808080"/><rect x="9" y="1" width="1" height="1" fill="#808080"/><rect x="1" y="2" width="1" height="1" fill="#808080"/><rect x="2" y="2" width="1" height="1" fill="#000"/><rect x="3" y="2" width="1" height="1" fill="#000"/><rect x="4" y="2" width="1" height="1" fill="#ffffff"/><rect x="5" y="2" width="1" height="1" fill="#ffffff"/><rect x="6" y="2" width="1" height="1" fill="#ffffff"/><rect x="7" y="2" width="1" height="1" fill="#ffffff"/><rect x="8" y="2" width="1" height="1" fill="#000"/><rect x="9" y="2" width="1" height="1" fill="#000"/><rect x="10" y="2" width="1" height="1" fill="#ffffff"/><rect x="1" y="3" width="1" height="1" fill="#808080"/><rect x="2" y="3" width="1" height="1" fill="#000"/><rect x="3" y="3" width="1" height="1" fill="#ffffff"/><rect x="4" y="3" width="1" height="1" fill="#ffffff"/><rect x="5" y="3" width="1" height="1" fill="#ffffff"/><rect x="6" y="3" width="1" height="1" fill="#ffffff"/><rect x="7" y="3" width="1" height="1" fill="#ffffff"/><rect x="8" y="3" width="1" height="1" fill="#ffffff"/><rect x="9" y="3" width="1" height="1" fill="#dfdfdf"/><rect x="10" y="3" width="1" height="1" fill="#ffffff"/><rect x="0" y="4" width="1" height="1" fill="#808080"/><rect x="1" y="4" width="1" height="1" fill="#000"/><rect x="2" y="4" width="1" height="1" fill="#ffffff"/><rect x="3" y="4" width="1" height="1" fill="#ffffff"/><rect x="4" y="4" width="1" height="1" fill="#ffffff"/><rect x="5" y="4" width="1" height="1" fill="#ffffff"/><rect x="6" y="4" width="1" height="1" fill="#ffffff"/><rect x="7" y="4" width="1" height="1" fill="#ffffff"/><rect x="8" y="4" width="1" height="1" fill="#ffffff"/><rect x="9" y="4" width="1" height="1" fill="#ffffff"/><rect x="10" y="4" width="1" height="1" fill="#dfdfdf"/><rect x="11" y="4" width="1" height="1" fill="#ffffff"/><rect x="0" y="5" width="1" height="1" fill="#808080"/><rect x="1" y="5" width="1" height="1" fill="#000"/><rect x="2" y="5" width="1" height="1" fill="#ffffff"/><rect x="3" y="5" width="1" height="1" fill="#ffffff"/><rect x="4" y="5" width="1" height="1" fill="#ffffff"/><rect x="5" y="5" width="1" height="1" fill="#ffffff"/><rect x="6" y="5" width="1" height="1" fill="#ffffff"/><rect x="7" y="5" width="1" height="1" fill="#ffffff"/><rect x="8" y="5" width="1" height="1" fill="#ffffff"/><rect x="9" y="5" width="1" height="1" fill="#ffffff"/><rect x="10" y="5" width="1" height="1" fill="#dfdfdf"/><rect x="11" y="5" width="1" height="1" fill="#ffffff"/><rect x="0" y="6" width="1" height="1" fill="#808080"/><rect x="1" y="6" width="1" height="1" fill="#000"/><rect x="2" y="6" width="1" height="1" fill="#ffffff"/><rect x="3" y="6" width="1" height="1" fill="#ffffff"/><rect x="4" y="6" width="1" height="1" fill="#ffffff"/><rect x="5" y="6" width="1" height="1" fill="#ffffff"/><rect x="6" y="6" width="1" height="1" fill="#ffffff"/><rect x="7" y="6" width="1" height="1" fill="#ffffff"/><rect x="8" y="6" width="1" height="1" fill="#ffffff"/><rect x="9" y="6" width="1" height="1" fill="#ffffff"/><rect x="10" y="6" width="1" height="1" fill="#dfdfdf"/><rect x="11" y="6" width="1" height="1" fill="#ffffff"/><rect x="0" y="7" width="1" height="1" fill="#808080"/><rect x="1" y="7" width="1" height="1" fill="#000"/><rect x="2" y="7" width="1" height="1" fill="#ffffff"/><rect x="3" y="7" width="1" height="1" fill="#ffffff"/><rect x="4" y="7" width="1" height="1" fill="#ffffff"/><rect x="5" y="7" width="1" height="1" fill="#ffffff"/><rect x="6" y="7" width="1" height="1" fill="#ffffff"/><rect x="7" y="7" width="1" height="1" fill="#ffffff"/><rect x="8" y="7" width="1" height="1" fill="#ffffff"/><rect x="9" y="7" width="1" height="1" fill="#ffffff"/><rect x="10" y="7" width="1" height="1" fill="#dfdfdf"/><rect x="11" y="7" width="1" height="1" fill="#ffffff"/><rect x="1" y="8" width="1" height="1" fill="#808080"/><rect x="2" y="8" width="1" height="1" fill="#000"/><rect x="3" y="8" width="1" height="1" fill="#ffffff"/><rect x="4" y="8" width="1" height="1" fill="#ffffff"/><rect x="5" y="8" width="1" height="1" fill="#ffffff"/><rect x="6" y="8" width="1" height="1" fill="#ffffff"/><rect x="7" y="8" width="1" height="1" fill="#ffffff"/><rect x="8" y="8" width="1" height="1" fill="#ffffff"/><rect x="9" y="8" width="1" height="1" fill="#dfdfdf"/><rect x="10" y="8" width="1" height="1" fill="#ffffff"/><rect x="1" y="9" width="1" height="1" fill="#ffffff"/><rect x="2" y="9" width="1" height="1" fill="#dfdfdf"/><rect x="3" y="9" width="1" height="1" fill="#dfdfdf"/><rect x="4" y="9" width="1" height="1" fill="#ffffff"/><rect x="5" y="9" width="1" height="1" fill="#ffffff"/><rect x="6" y="9" width="1" height="1" fill="#ffffff"/><rect x="7" y="9" width="1" height="1" fill="#ffffff"/><rect x="8" y="9" width="1" height="1" fill="#dfdfdf"/><rect x="9" y="9" width="1" height="1" fill="#dfdfdf"/><rect x="10" y="9" width="1" height="1" fill="#ffffff"/><rect x="2" y="10" width="1" height="1" fill="#ffffff"/><rect x="3" y="10" width="1" height="1" fill="#ffffff"/><rect x="4" y="10" width="1" height="1" fill="#dfdfdf"/><rect x="5" y="10" width="1" height="1" fill="#dfdfdf"/><rect x="6" y="10" width="1" height="1" fill="#dfdfdf"/><rect x="7" y="10" width="1" height="1" fill="#dfdfdf"/><rect x="8" y="10" width="1" height="1" fill="#ffffff"/><rect x="9" y="10" width="1" height="1" fill="#ffffff"/><rect x="4" y="11" width="1" height="1" fill="#ffffff"/><rect x="5" y="11" width="1" height="1" fill="#ffffff"/><rect x="6" y="11" width="1" height="1" fill="#ffffff"/><rect x="7" y="11" width="1" height="1" fill="#ffffff"/></svg>
<div class="t" style="left:627.40px;top:177.69px;color:#000;font-size:11px;font-weight:normal;line-height:13px;letter-spacing:-0.167px;">regulační systém</div>
<div style="position:absolute;left:188px;top:213px;width:830px;height:1px;background:#808080;"></div>
<div style="position:absolute;left:189px;top:214px;width:830px;height:1px;background:#ffffff;"></div>
<div style="position:absolute;left:188px;top:213px;width:1px;height:110px;background:#808080;"></div>
<div style="position:absolute;left:189px;top:214px;width:1px;height:109px;background:#ffffff;"></div>
<div style="position:absolute;left:188px;top:322px;width:830px;height:1px;background:#808080;"></div>
<div style="position:absolute;left:188px;top:323px;width:830px;height:1px;background:#ffffff;"></div>
<div style="position:absolute;left:194px;top:208px;width:76px;height:12px;background:#c0c0c0;"></div>
<div class="t" style="left:196.60px;top:208.69px;color:#000;font-size:11px;font-weight:normal;line-height:13px;letter-spacing:-0.231px;">Výběr řady PLC</div>
<svg style="position:absolute;left:220px;top:263px" width="12" height="12" viewBox="0 0 12 12" shape-rendering="crispEdges"><rect x="4" y="0" width="1" height="1" fill="#808080"/><rect x="5" y="0" width="1" height="1" fill="#808080"/><rect x="6" y="0" width="1" height="1" fill="#808080"/><rect x="7" y="0" width="1" height="1" fill="#808080"/><rect x="2" y="1" width="1" height="1" fill="#808080"/><rect x="3" y="1" width="1" height="1" fill="#808080"/><rect x="4" y="1" width="1" height="1" fill="#000"/><rect x="5" y="1" width="1" height="1" fill="#000"/><rect x="6" y="1" width="1" height="1" fill="#000"/><rect x="7" y="1" width="1" height="1" fill="#000"/><rect x="8" y="1" width="1" height="1" fill="#808080"/><rect x="9" y="1" width="1" height="1" fill="#808080"/><rect x="1" y="2" width="1" height="1" fill="#808080"/><rect x="2" y="2" width="1" height="1" fill="#000"/><rect x="3" y="2" width="1" height="1" fill="#000"/><rect x="4" y="2" width="1" height="1" fill="#ffffff"/><rect x="5" y="2" width="1" height="1" fill="#ffffff"/><rect x="6" y="2" width="1" height="1" fill="#ffffff"/><rect x="7" y="2" width="1" height="1" fill="#ffffff"/><rect x="8" y="2" width="1" height="1" fill="#000"/><rect x="9" y="2" width="1" height="1" fill="#000"/><rect x="10" y="2" width="1" height="1" fill="#ffffff"/><rect x="1" y="3" width="1" height="1" fill="#808080"/><rect x="2" y="3" width="1" height="1" fill="#000"/><rect x="3" y="3" width="1" height="1" fill="#ffffff"/><rect x="4" y="3" width="1" height="1" fill="#ffffff"/><rect x="5" y="3" width="1" height="1" fill="#ffffff"/><rect x="6" y="3" width="1" height="1" fill="#ffffff"/><rect x="7" y="3" width="1" height="1" fill="#ffffff"/><rect x="8" y="3" width="1" height="1" fill="#ffffff"/><rect x="9" y="3" width="1" height="1" fill="#dfdfdf"/><rect x="10" y="3" width="1" height="1" fill="#ffffff"/><rect x="0" y="4" width="1" height="1" fill="#808080"/><rect x="1" y="4" width="1" height="1" fill="#000"/><rect x="2" y="4" width="1" height="1" fill="#ffffff"/><rect x="3" y="4" width="1" height="1" fill="#ffffff"/><rect x="4" y="4" width="1" height="1" fill="#ffffff"/><rect x="5" y="4" width="1" height="1" fill="#ffffff"/><rect x="6" y="4" width="1" height="1" fill="#ffffff"/><rect x="7" y="4" width="1" height="1" fill="#ffffff"/><rect x="8" y="4" width="1" height="1" fill="#ffffff"/><rect x="9" y="4" width="1" height="1" fill="#ffffff"/><rect x="10" y="4" width="1" height="1" fill="#dfdfdf"/><rect x="11" y="4" width="1" height="1" fill="#ffffff"/><rect x="0" y="5" width="1" height="1" fill="#808080"/><rect x="1" y="5" width="1" height="1" fill="#000"/><rect x="2" y="5" width="1" height="1" fill="#ffffff"/><rect x="3" y="5" width="1" height="1" fill="#ffffff"/><rect x="4" y="5" width="1" height="1" fill="#ffffff"/><rect x="5" y="5" width="1" height="1" fill="#ffffff"/><rect x="6" y="5" width="1" height="1" fill="#ffffff"/><rect x="7" y="5" width="1" height="1" fill="#ffffff"/><rect x="8" y="5" width="1" height="1" fill="#ffffff"/><rect x="9" y="5" width="1" height="1" fill="#ffffff"/><rect x="10" y="5" width="1" height="1" fill="#dfdfdf"/><rect x="11" y="5" width="1" height="1" fill="#ffffff"/><rect x="0" y="6" width="1" height="1" fill="#808080"/><rect x="1" y="6" width="1" height="1" fill="#000"/><rect x="2" y="6" width="1" height="1" fill="#ffffff"/><rect x="3" y="6" width="1" height="1" fill="#ffffff"/><rect x="4" y="6" width="1" height="1" fill="#ffffff"/><rect x="5" y="6" width="1" height="1" fill="#ffffff"/><rect x="6" y="6" width="1" height="1" fill="#ffffff"/><rect x="7" y="6" width="1" height="1" fill="#ffffff"/><rect x="8" y="6" width="1" height="1" fill="#ffffff"/><rect x="9" y="6" width="1" height="1" fill="#ffffff"/><rect x="10" y="6" width="1" height="1" fill="#dfdfdf"/><rect x="11" y="6" width="1" height="1" fill="#ffffff"/><rect x="0" y="7" width="1" height="1" fill="#808080"/><rect x="1" y="7" width="1" height="1" fill="#000"/><rect x="2" y="7" width="1" height="1" fill="#ffffff"/><rect x="3" y="7" width="1" height="1" fill="#ffffff"/><rect x="4" y="7" width="1" height="1" fill="#ffffff"/><rect x="5" y="7" width="1" height="1" fill="#ffffff"/><rect x="6" y="7" width="1" height="1" fill="#ffffff"/><rect x="7" y="7" width="1" height="1" fill="#ffffff"/><rect x="8" y="7" width="1" height="1" fill="#ffffff"/><rect x="9" y="7" width="1" height="1" fill="#ffffff"/><rect x="10" y="7" width="1" height="1" fill="#dfdfdf"/><rect x="11" y="7" width="1" height="1" fill="#ffffff"/><rect x="1" y="8" width="1" height="1" fill="#808080"/><rect x="2" y="8" width="1" height="1" fill="#000"/><rect x="3" y="8" width="1" height="1" fill="#ffffff"/><rect x="4" y="8" width="1" height="1" fill="#ffffff"/><rect x="5" y="8" width="1" height="1" fill="#ffffff"/><rect x="6" y="8" width="1" height="1" fill="#ffffff"/><rect x="7" y="8" width="1" height="1" fill="#ffffff"/><rect x="8" y="8" width="1" height="1" fill="#ffffff"/><rect x="9" y="8" width="1" height="1" fill="#dfdfdf"/><rect x="10" y="8" width="1" height="1" fill="#ffffff"/><rect x="1" y="9" width="1" height="1" fill="#ffffff"/><rect x="2" y="9" width="1" height="1" fill="#dfdfdf"/><rect x="3" y="9" width="1" height="1" fill="#dfdfdf"/><rect x="4" y="9" width="1" height="1" fill="#ffffff"/><rect x="5" y="9" width="1" height="1" fill="#ffffff"/><rect x="6" y="9" width="1" height="1" fill="#ffffff"/><rect x="7" y="9" width="1" height="1" fill="#ffffff"/><rect x="8" y="9" width="1" height="1" fill="#dfdfdf"/><rect x="9" y="9" width="1" height="1" fill="#dfdfdf"/><rect x="10" y="9" width="1" height="1" fill="#ffffff"/><rect x="2" y="10" width="1" height="1" fill="#ffffff"/><rect x="3" y="10" width="1" height="1" fill="#ffffff"/><rect x="4" y="10" width="1" height="1" fill="#dfdfdf"/><rect x="5" y="10" width="1" height="1" fill="#dfdfdf"/><rect x="6" y="10" width="1" height="1" fill="#dfdfdf"/><rect x="7" y="10" width="1" height="1" fill="#dfdfdf"/><rect x="8" y="10" width="1" height="1" fill="#ffffff"/><rect x="9" y="10" width="1" height="1" fill="#ffffff"/><rect x="4" y="11" width="1" height="1" fill="#ffffff"/><rect x="5" y="11" width="1" height="1" fill="#ffffff"/><rect x="6" y="11" width="1" height="1" fill="#ffffff"/><rect x="7" y="11" width="1" height="1" fill="#ffffff"/></svg>
<svg style="position:absolute;left:421px;top:263px" width="12" height="12" viewBox="0 0 12 12" shape-rendering="crispEdges"><rect x="4" y="0" width="1" height="1" fill="#808080"/><rect x="5" y="0" width="1" height="1" fill="#808080"/><rect x="6" y="0" width="1" height="1" fill="#808080"/><rect x="7" y="0" width="1" height="1" fill="#808080"/><rect x="2" y="1" width="1" height="1" fill="#808080"/><rect x="3" y="1" width="1" height="1" fill="#808080"/><rect x="4" y="1" width="1" height="1" fill="#000"/><rect x="5" y="1" width="1" height="1" fill="#000"/><rect x="6" y="1" width="1" height="1" fill="#000"/><rect x="7" y="1" width="1" height="1" fill="#000"/><rect x="8" y="1" width="1" height="1" fill="#808080"/><rect x="9" y="1" width="1" height="1" fill="#808080"/><rect x="1" y="2" width="1" height="1" fill="#808080"/><rect x="2" y="2" width="1" height="1" fill="#000"/><rect x="3" y="2" width="1" height="1" fill="#000"/><rect x="4" y="2" width="1" height="1" fill="#ffffff"/><rect x="5" y="2" width="1" height="1" fill="#ffffff"/><rect x="6" y="2" width="1" height="1" fill="#ffffff"/><rect x="7" y="2" width="1" height="1" fill="#ffffff"/><rect x="8" y="2" width="1" height="1" fill="#000"/><rect x="9" y="2" width="1" height="1" fill="#000"/><rect x="10" y="2" width="1" height="1" fill="#ffffff"/><rect x="1" y="3" width="1" height="1" fill="#808080"/><rect x="2" y="3" width="1" height="1" fill="#000"/><rect x="3" y="3" width="1" height="1" fill="#ffffff"/><rect x="4" y="3" width="1" height="1" fill="#ffffff"/><rect x="5" y="3" width="1" height="1" fill="#ffffff"/><rect x="6" y="3" width="1" height="1" fill="#ffffff"/><rect x="7" y="3" width="1" height="1" fill="#ffffff"/><rect x="8" y="3" width="1" height="1" fill="#ffffff"/><rect x="9" y="3" width="1" height="1" fill="#dfdfdf"/><rect x="10" y="3" width="1" height="1" fill="#ffffff"/><rect x="0" y="4" width="1" height="1" fill="#808080"/><rect x="1" y="4" width="1" height="1" fill="#000"/><rect x="2" y="4" width="1" height="1" fill="#ffffff"/><rect x="3" y="4" width="1" height="1" fill="#ffffff"/><rect x="4" y="4" width="1" height="1" fill="#ffffff"/><rect x="5" y="4" width="1" height="1" fill="#ffffff"/><rect x="6" y="4" width="1" height="1" fill="#ffffff"/><rect x="7" y="4" width="1" height="1" fill="#ffffff"/><rect x="8" y="4" width="1" height="1" fill="#ffffff"/><rect x="9" y="4" width="1" height="1" fill="#ffffff"/><rect x="10" y="4" width="1" height="1" fill="#dfdfdf"/><rect x="11" y="4" width="1" height="1" fill="#ffffff"/><rect x="0" y="5" width="1" height="1" fill="#808080"/><rect x="1" y="5" width="1" height="1" fill="#000"/><rect x="2" y="5" width="1" height="1" fill="#ffffff"/><rect x="3" y="5" width="1" height="1" fill="#ffffff"/><rect x="4" y="5" width="1" height="1" fill="#ffffff"/><rect x="5" y="5" width="1" height="1" fill="#ffffff"/><rect x="6" y="5" width="1" height="1" fill="#ffffff"/><rect x="7" y="5" width="1" height="1" fill="#ffffff"/><rect x="8" y="5" width="1" height="1" fill="#ffffff"/><rect x="9" y="5" width="1" height="1" fill="#ffffff"/><rect x="10" y="5" width="1" height="1" fill="#dfdfdf"/><rect x="11" y="5" width="1" height="1" fill="#ffffff"/><rect x="0" y="6" width="1" height="1" fill="#808080"/><rect x="1" y="6" width="1" height="1" fill="#000"/><rect x="2" y="6" width="1" height="1" fill="#ffffff"/><rect x="3" y="6" width="1" height="1" fill="#ffffff"/><rect x="4" y="6" width="1" height="1" fill="#ffffff"/><rect x="5" y="6" width="1" height="1" fill="#ffffff"/><rect x="6" y="6" width="1" height="1" fill="#ffffff"/><rect x="7" y="6" width="1" height="1" fill="#ffffff"/><rect x="8" y="6" width="1" height="1" fill="#ffffff"/><rect x="9" y="6" width="1" height="1" fill="#ffffff"/><rect x="10" y="6" width="1" height="1" fill="#dfdfdf"/><rect x="11" y="6" width="1" height="1" fill="#ffffff"/><rect x="0" y="7" width="1" height="1" fill="#808080"/><rect x="1" y="7" width="1" height="1" fill="#000"/><rect x="2" y="7" width="1" height="1" fill="#ffffff"/><rect x="3" y="7" width="1" height="1" fill="#ffffff"/><rect x="4" y="7" width="1" height="1" fill="#ffffff"/><rect x="5" y="7" width="1" height="1" fill="#ffffff"/><rect x="6" y="7" width="1" height="1" fill="#ffffff"/><rect x="7" y="7" width="1" height="1" fill="#ffffff"/><rect x="8" y="7" width="1" height="1" fill="#ffffff"/><rect x="9" y="7" width="1" height="1" fill="#ffffff"/><rect x="10" y="7" width="1" height="1" fill="#dfdfdf"/><rect x="11" y="7" width="1" height="1" fill="#ffffff"/><rect x="1" y="8" width="1" height="1" fill="#808080"/><rect x="2" y="8" width="1" height="1" fill="#000"/><rect x="3" y="8" width="1" height="1" fill="#ffffff"/><rect x="4" y="8" width="1" height="1" fill="#ffffff"/><rect x="5" y="8" width="1" height="1" fill="#ffffff"/><rect x="6" y="8" width="1" height="1" fill="#ffffff"/><rect x="7" y="8" width="1" height="1" fill="#ffffff"/><rect x="8" y="8" width="1" height="1" fill="#ffffff"/><rect x="9" y="8" width="1" height="1" fill="#dfdfdf"/><rect x="10" y="8" width="1" height="1" fill="#ffffff"/><rect x="1" y="9" width="1" height="1" fill="#ffffff"/><rect x="2" y="9" width="1" height="1" fill="#dfdfdf"/><rect x="3" y="9" width="1" height="1" fill="#dfdfdf"/><rect x="4" y="9" width="1" height="1" fill="#ffffff"/><rect x="5" y="9" width="1" height="1" fill="#ffffff"/><rect x="6" y="9" width="1" height="1" fill="#ffffff"/><rect x="7" y="9" width="1" height="1" fill="#ffffff"/><rect x="8" y="9" width="1" height="1" fill="#dfdfdf"/><rect x="9" y="9" width="1" height="1" fill="#dfdfdf"/><rect x="10" y="9" width="1" height="1" fill="#ffffff"/><rect x="2" y="10" width="1" height="1" fill="#ffffff"/><rect x="3" y="10" width="1" height="1" fill="#ffffff"/><rect x="4" y="10" width="1" height="1" fill="#dfdfdf"/><rect x="5" y="10" width="1" height="1" fill="#dfdfdf"/><rect x="6" y="10" width="1" height="1" fill="#dfdfdf"/><rect x="7" y="10" width="1" height="1" fill="#dfdfdf"/><rect x="8" y="10" width="1" height="1" fill="#ffffff"/><rect x="9" y="10" width="1" height="1" fill="#ffffff"/><rect x="4" y="11" width="1" height="1" fill="#ffffff"/><rect x="5" y="11" width="1" height="1" fill="#ffffff"/><rect x="6" y="11" width="1" height="1" fill="#ffffff"/><rect x="7" y="11" width="1" height="1" fill="#ffffff"/></svg>
<svg style="position:absolute;left:236px;top:232px" width="115" height="80" viewBox="0 0 115 80" shape-rendering="crispEdges"><rect x="0" y="0" width="115" height="80" fill="#000"/><rect x="1" y="1" width="33" height="78" fill="#808080"/><rect x="7" y="15" width="26" height="55" fill="#c0c0c0"/><rect x="2" y="73" width="31" height="3" fill="#0000ff"/><text x="2" y="11.3" font-family="Liberation Sans" font-weight="bold" font-size="12.5" fill="#9090ff" stroke="#0000b0" stroke-width="1.3" paint-order="stroke" textLength="30.5" lengthAdjust="spacingAndGlyphs" shape-rendering="auto">teco</text><rect x="35" y="1" width="15" height="78" fill="#808080"/><rect x="35" y="15" width="11" height="55" fill="#c0c0c0"/><rect x="35" y="73" width="15" height="3" fill="#00ffff"/><path d="M36 8 L38.5 3 L41 8 Z M41 8 L43.5 13 L46 8 Z" fill="#0000d0" shape-rendering="auto"/><rect x="40" y="8" width="2" height="1" fill="#0000d0"/><rect x="46" y="14" width="3" height="4" fill="#00e000"/><rect x="46" y="19" width="3" height="3" fill="#e00000"/><rect x="51" y="1" width="15" height="78" fill="#808080"/><rect x="51" y="15" width="11" height="55" fill="#c0c0c0"/><rect x="51" y="73" width="15" height="3" fill="#ff0000"/><path d="M52 8 L54.5 3 L57 8 Z M57 8 L59.5 13 L62 8 Z" fill="#0000d0" shape-rendering="auto"/><rect x="56" y="8" width="2" height="1" fill="#0000d0"/><rect x="62" y="14" width="3" height="3" fill="#e00000"/><rect x="62" y="19" width="3" height="3" fill="#e00000"/><rect x="62" y="32" width="3" height="3" fill="#00e000"/><rect x="62" y="37" width="3" height="3" fill="#00e000"/><rect x="62" y="42" width="3" height="3" fill="#00e000"/><rect x="62" y="47" width="3" height="3" fill="#00e000"/><rect x="62" y="52" width="3" height="3" fill="#00e000"/><rect x="62" y="57" width="3" height="3" fill="#00e000"/><rect x="62" y="62" width="3" height="3" fill="#00e000"/><rect x="62" y="67" width="3" height="3" fill="#00e000"/><rect x="67" y="1" width="15" height="78" fill="#808080"/><rect x="67" y="15" width="11" height="55" fill="#c0c0c0"/><rect x="67" y="73" width="15" height="3" fill="#ff00ff"/><path d="M68 8 L70.5 3 L73 8 Z M73 8 L75.5 13 L78 8 Z" fill="#0000d0" shape-rendering="auto"/><rect x="72" y="8" width="2" height="1" fill="#0000d0"/><rect x="78" y="14" width="3" height="3" fill="#e00000"/><rect x="78" y="19" width="3" height="3" fill="#e00000"/><rect x="78" y="32" width="3" height="3" fill="#00e000"/><rect x="78" y="37" width="3" height="3" fill="#00e000"/><rect x="78" y="52" width="3" height="3" fill="#00e000"/><rect x="78" y="57" width="3" height="3" fill="#00e000"/><rect x="78" y="42" width="3" height="3" fill="#907070"/><rect x="78" y="47" width="3" height="3" fill="#907070"/><rect x="78" y="62" width="3" height="3" fill="#907070"/><rect x="78" y="67" width="3" height="3" fill="#907070"/><rect x="83" y="1" width="15" height="78" fill="#808080"/><rect x="83" y="15" width="11" height="55" fill="#c0c0c0"/><rect x="83" y="73" width="15" height="3" fill="#ff00ff"/><path d="M84 8 L86.5 3 L89 8 Z M89 8 L91.5 13 L94 8 Z" fill="#0000d0" shape-rendering="auto"/><rect x="88" y="8" width="2" height="1" fill="#0000d0"/><rect x="94" y="14" width="3" height="3" fill="#e00000"/><rect x="94" y="19" width="3" height="3" fill="#e00000"/><rect x="94" y="32" width="3" height="3" fill="#00e000"/><rect x="94" y="37" width="3" height="3" fill="#00e000"/><rect x="94" y="52" width="3" height="3" fill="#00e000"/><rect x="94" y="57" width="3" height="3" fill="#00e000"/><rect x="94" y="42" width="3" height="3" fill="#907070"/><rect x="94" y="47" width="3" height="3" fill="#907070"/><rect x="94" y="62" width="3" height="3" fill="#907070"/><rect x="94" y="67" width="3" height="3" fill="#907070"/><rect x="99" y="1" width="15" height="78" fill="#808080"/><rect x="99" y="15" width="11" height="55" fill="#c0c0c0"/><rect x="99" y="73" width="15" height="3" fill="#ff0000"/><path d="M100 8 L102.5 3 L105 8 Z M105 8 L107.5 13 L110 8 Z" fill="#0000d0" shape-rendering="auto"/><rect x="104" y="8" width="2" height="1" fill="#0000d0"/><rect x="110" y="14" width="3" height="3" fill="#e00000"/><rect x="110" y="19" width="3" height="3" fill="#e00000"/><rect x="110" y="32" width="3" height="3" fill="#00e000"/><rect x="110" y="37" width="3" height="3" fill="#00e000"/><rect x="110" y="42" width="3" height="3" fill="#00e000"/><rect x="110" y="47" width="3" height="3" fill="#00e000"/><rect x="110" y="52" width="3" height="3" fill="#00e000"/><rect x="110" y="57" width="3" height="3" fill="#00e000"/><rect x="110" y="62" width="3" height="3" fill="#00e000"/><rect x="110" y="67" width="3" height="3" fill="#00e000"/></svg>
<svg style="position:absolute;left:437px;top:229px" width="122" height="80" viewBox="0 0 122 80" shape-rendering="crispEdges"><rect x="0" y="0" width="122" height="80" fill="#000"/><rect x="1" y="1" width="8" height="78" fill="#c0c0c0"/><path d="M5 10 L7 13 L7 24 L5 27 L3 24 L3 13 Z" fill="#000" shape-rendering="auto"/><path d="M5 40 L7 43 L7 54 L5 57 L3 54 L3 43 Z" fill="#000" shape-rendering="auto"/><rect x="3" y="67" width="4" height="4" fill="#000"/><rect x="9" y="1" width="1" height="78" fill="#000"/><rect x="10" y="1" width="13" height="25" fill="#888888"/><rect x="10" y="26" width="13" height="53" fill="#a4a4a4"/><rect x="23" y="0" width="1" height="80" fill="#000"/><rect x="24" y="1" width="13" height="25" fill="#888888"/><rect x="24" y="26" width="13" height="45" fill="#a4a4a4"/><rect x="24" y="71" width="13" height="8" fill="#808080"/><rect x="24" y="1" width="13" height="3" fill="#000060"/><rect x="24" y="31" width="13" height="6" fill="#00ffff"/><rect x="25" y="5" width="2" height="2" fill="#00e000"/><rect x="25" y="8" width="2" height="2" fill="#e00000"/><rect x="25" y="11" width="2" height="7" fill="#00e000"/><rect x="25" y="20" width="2" height="2" fill="#ffff80"/><rect x="25" y="23" width="2" height="2" fill="#e00000"/><rect x="28" y="11" width="4" height="1" fill="#ffffff"/><rect x="28" y="14" width="4" height="1" fill="#ffffff"/><rect x="28" y="17" width="4" height="1" fill="#ffffff"/><rect x="33" y="20" width="2" height="2" fill="#00c000"/><rect x="37" y="0" width="1" height="80" fill="#000"/><rect x="38" y="1" width="13" height="25" fill="#888888"/><rect x="38" y="26" width="13" height="45" fill="#a4a4a4"/><rect x="38" y="71" width="13" height="8" fill="#808080"/><rect x="38" y="1" width="13" height="3" fill="#80e0f0"/><rect x="38" y="31" width="13" height="6" fill="#00ffff"/><rect x="39" y="5" width="2" height="2" fill="#00c000"/><rect x="47" y="5" width="2" height="2" fill="#e00000"/><rect x="38" y="8" width="1" height="1" fill="#ffff40"/><rect x="39" y="8" width="1" height="1" fill="#ffff40"/><rect x="40" y="8" width="1" height="1" fill="#ffff40"/><rect x="38" y="9" width="1" height="1" fill="#ffff40"/><rect x="41" y="9" width="1" height="1" fill="#ffff40"/><rect x="43" y="9" width="1" height="1" fill="#ffff40"/><rect x="46" y="9" width="1" height="1" fill="#ffff40"/><rect x="48" y="9" width="1" height="1" fill="#ffff40"/><rect x="49" y="9" width="1" height="1" fill="#ffff40"/><rect x="38" y="10" width="1" height="1" fill="#ffff40"/><rect x="39" y="10" width="1" height="1" fill="#ffff40"/><rect x="40" y="10" width="1" height="1" fill="#ffff40"/><rect x="43" y="10" width="1" height="1" fill="#ffff40"/><rect x="46" y="10" width="1" height="1" fill="#ffff40"/><rect x="48" y="10" width="1" height="1" fill="#ffff40"/><rect x="50" y="10" width="1" height="1" fill="#ffff40"/><rect x="38" y="11" width="1" height="1" fill="#ffff40"/><rect x="40" y="11" width="1" height="1" fill="#ffff40"/><rect x="43" y="11" width="1" height="1" fill="#ffff40"/><rect x="46" y="11" width="1" height="1" fill="#ffff40"/><rect x="48" y="11" width="1" height="1" fill="#ffff40"/><rect x="50" y="11" width="1" height="1" fill="#ffff40"/><rect x="38" y="12" width="1" height="1" fill="#ffff40"/><rect x="41" y="12" width="1" height="1" fill="#ffff40"/><rect x="44" y="12" width="1" height="1" fill="#ffff40"/><rect x="45" y="12" width="1" height="1" fill="#ffff40"/><rect x="48" y="12" width="1" height="1" fill="#ffff40"/><rect x="50" y="12" width="1" height="1" fill="#ffff40"/><rect x="39" y="14" width="2" height="2" fill="#00c000"/><rect x="43" y="14" width="2" height="2" fill="#00c000"/><rect x="47" y="14" width="2" height="2" fill="#00c000"/><rect x="39" y="17" width="2" height="2" fill="#00c000"/><rect x="43" y="17" width="2" height="2" fill="#00c000"/><rect x="47" y="17" width="2" height="2" fill="#00c000"/><rect x="39" y="20" width="2" height="2" fill="#00c000"/><rect x="43" y="20" width="2" height="2" fill="#00c000"/><rect x="47" y="20" width="2" height="2" fill="#00c000"/><rect x="39" y="23" width="2" height="2" fill="#ffff00"/><rect x="43" y="24" width="2" height="2" fill="#e00000"/><rect x="38" y="32" width="1" height="1" fill="#004040"/><rect x="39" y="32" width="1" height="1" fill="#004040"/><rect x="40" y="32" width="1" height="1" fill="#004040"/><rect x="41" y="32" width="1" height="1" fill="#004040"/><rect x="41" y="33" width="1" height="1" fill="#004040"/><rect x="40" y="34" width="1" height="1" fill="#004040"/><rect x="39" y="35" width="1" height="1" fill="#004040"/><rect x="39" y="36" width="1" height="1" fill="#004040"/><rect x="43" y="32" width="1" height="1" fill="#004040"/><rect x="44" y="32" width="1" height="1" fill="#004040"/><rect x="42" y="33" width="1" height="1" fill="#004040"/><rect x="45" y="33" width="1" height="1" fill="#004040"/><rect x="42" y="34" width="1" height="1" fill="#004040"/><rect x="45" y="34" width="1" height="1" fill="#004040"/><rect x="42" y="35" width="1" height="1" fill="#004040"/><rect x="45" y="35" width="1" height="1" fill="#004040"/><rect x="43" y="36" width="1" height="1" fill="#004040"/><rect x="44" y="36" width="1" height="1" fill="#004040"/><rect x="47" y="32" width="1" height="1" fill="#004040"/><rect x="48" y="32" width="1" height="1" fill="#004040"/><rect x="46" y="33" width="1" height="1" fill="#004040"/><rect x="49" y="33" width="1" height="1" fill="#004040"/><rect x="46" y="34" width="1" height="1" fill="#004040"/><rect x="49" y="34" width="1" height="1" fill="#004040"/><rect x="46" y="35" width="1" height="1" fill="#004040"/><rect x="49" y="35" width="1" height="1" fill="#004040"/><rect x="47" y="36" width="1" height="1" fill="#004040"/><rect x="48" y="36" width="1" height="1" fill="#004040"/><rect x="51" y="0" width="1" height="80" fill="#000"/><rect x="52" y="1" width="13" height="25" fill="#888888"/><rect x="52" y="26" width="13" height="45" fill="#a4a4a4"/><rect x="52" y="71" width="13" height="8" fill="#808080"/><rect x="52" y="1" width="13" height="3" fill="#c03030"/><rect x="52" y="31" width="13" height="6" fill="#00ffff"/><rect x="53" y="5" width="2" height="2" fill="#00e000"/><rect x="55" y="8" width="2" height="2" fill="#00d000"/><rect x="59" y="8" width="2" height="2" fill="#00d000"/><rect x="55" y="11" width="2" height="2" fill="#40a040"/><rect x="59" y="11" width="2" height="2" fill="#40a040"/><rect x="55" y="14" width="2" height="2" fill="#00d000"/><rect x="59" y="14" width="2" height="2" fill="#00d000"/><rect x="55" y="17" width="2" height="2" fill="#40a040"/><rect x="59" y="17" width="2" height="2" fill="#40a040"/><rect x="55" y="20" width="2" height="2" fill="#00d000"/><rect x="59" y="20" width="2" height="2" fill="#00d000"/><rect x="65" y="0" width="1" height="80" fill="#000"/><rect x="66" y="1" width="13" height="25" fill="#888888"/><rect x="66" y="26" width="13" height="45" fill="#a4a4a4"/><rect x="66" y="71" width="13" height="8" fill="#808080"/><rect x="66" y="1" width="13" height="3" fill="#803080"/><rect x="66" y="31" width="13" height="6" fill="#00ffff"/><rect x="67" y="5" width="2" height="2" fill="#00e000"/><rect x="69" y="8" width="2" height="2" fill="#00d000"/><rect x="73" y="8" width="2" height="2" fill="#00d000"/><rect x="69" y="11" width="2" height="2" fill="#00d000"/><rect x="73" y="11" width="2" height="2" fill="#00d000"/><rect x="69" y="14" width="2" height="2" fill="#00d000"/><rect x="73" y="14" width="2" height="2" fill="#00d000"/><rect x="69" y="17" width="2" height="2" fill="#00d000"/><rect x="73" y="17" width="2" height="2" fill="#00d000"/><rect x="69" y="20" width="2" height="2" fill="#00d000"/><rect x="73" y="20" width="2" height="2" fill="#00d000"/><rect x="79" y="0" width="1" height="80" fill="#000"/><rect x="80" y="1" width="13" height="25" fill="#888888"/><rect x="80" y="26" width="13" height="45" fill="#a4a4a4"/><rect x="80" y="71" width="13" height="8" fill="#808080"/><rect x="80" y="1" width="13" height="3" fill="#40c040"/><rect x="80" y="31" width="13" height="6" fill="#00ffff"/><rect x="81" y="5" width="2" height="2" fill="#00e000"/><rect x="83" y="8" width="2" height="2" fill="#00d000"/><rect x="87" y="8" width="2" height="2" fill="#00d000"/><rect x="83" y="11" width="2" height="2" fill="#40a040"/><rect x="87" y="11" width="2" height="2" fill="#40a040"/><rect x="83" y="14" width="2" height="2" fill="#00d000"/><rect x="87" y="14" width="2" height="2" fill="#00d000"/><rect x="83" y="17" width="2" height="2" fill="#40a040"/><rect x="87" y="17" width="2" height="2" fill="#40a040"/><rect x="83" y="20" width="2" height="2" fill="#00d000"/><rect x="87" y="20" width="2" height="2" fill="#00d000"/><rect x="93" y="0" width="1" height="80" fill="#000"/><rect x="94" y="1" width="13" height="25" fill="#888888"/><rect x="94" y="26" width="13" height="45" fill="#a4a4a4"/><rect x="94" y="71" width="13" height="8" fill="#808080"/><rect x="94" y="1" width="13" height="3" fill="#c03030"/><rect x="94" y="31" width="13" height="6" fill="#00ffff"/><rect x="95" y="5" width="2" height="2" fill="#00e000"/><rect x="97" y="8" width="2" height="2" fill="#00d000"/><rect x="101" y="8" width="2" height="2" fill="#00d000"/><rect x="97" y="11" width="2" height="2" fill="#00d000"/><rect x="101" y="11" width="2" height="2" fill="#00d000"/><rect x="97" y="14" width="2" height="2" fill="#00d000"/><rect x="101" y="14" width="2" height="2" fill="#00d000"/><rect x="97" y="17" width="2" height="2" fill="#00d000"/><rect x="101" y="17" width="2" height="2" fill="#00d000"/><rect x="97" y="20" width="2" height="2" fill="#00d000"/><rect x="101" y="20" width="2" height="2" fill="#00d000"/><rect x="107" y="0" width="1" height="80" fill="#000"/><rect x="108" y="1" width="13" height="25" fill="#888888"/><rect x="108" y="26" width="13" height="45" fill="#a4a4a4"/><rect x="108" y="71" width="13" height="8" fill="#808080"/><rect x="108" y="1" width="13" height="3" fill="#208020"/><rect x="108" y="31" width="13" height="6" fill="#00ffff"/><rect x="109" y="5" width="2" height="2" fill="#00e000"/><rect x="111" y="8" width="2" height="2" fill="#00d000"/><rect x="115" y="8" width="2" height="2" fill="#00d000"/><rect x="111" y="11" width="2" height="2" fill="#40a040"/><rect x="115" y="11" width="2" height="2" fill="#40a040"/><rect x="111" y="14" width="2" height="2" fill="#00d000"/><rect x="115" y="14" width="2" height="2" fill="#00d000"/><rect x="111" y="17" width="2" height="2" fill="#40a040"/><rect x="115" y="17" width="2" height="2" fill="#40a040"/><rect x="111" y="20" width="2" height="2" fill="#00d000"/><rect x="115" y="20" width="2" height="2" fill="#00d000"/><rect x="121" y="0" width="1" height="80" fill="#000"/></svg>
<div style="position:absolute;left:598px;top:229px;width:155px;height:80px;background:#0000ff;"></div>
<div style="position:absolute;left:601px;top:232px;width:149px;height:74px;background:#d8d8f0;"></div>
<div style="position:absolute;left:602px;top:233px;width:147px;height:72px;background:#c0c0c0;"></div>
<svg style="position:absolute;left:626px;top:238px" width="115" height="64" viewBox="0 0 115 64" shape-rendering="crispEdges"><rect x="0" y="0" width="73" height="64" fill="#000"/><rect x="1" y="1" width="71" height="62" fill="#fcfcfc"/><circle cx="5.0" cy="5.5" r="1.7" fill="#c8c8c8" stroke="#909090" stroke-width="0.9" shape-rendering="auto"/><circle cx="5.0" cy="58.5" r="1.7" fill="#c8c8c8" stroke="#909090" stroke-width="0.9" shape-rendering="auto"/><rect x="5" y="11" width="1" height="4" fill="#a8a8a8"/><rect x="5" y="48" width="1" height="4" fill="#a8a8a8"/><circle cx="8.6" cy="5.5" r="1.7" fill="#c8c8c8" stroke="#909090" stroke-width="0.9" shape-rendering="auto"/><circle cx="8.6" cy="58.5" r="1.7" fill="#c8c8c8" stroke="#909090" stroke-width="0.9" shape-rendering="auto"/><rect x="8" y="11" width="1" height="4" fill="#a8a8a8"/><rect x="8" y="48" width="1" height="4" fill="#a8a8a8"/><circle cx="12.2" cy="5.5" r="1.7" fill="#c8c8c8" stroke="#909090" stroke-width="0.9" shape-rendering="auto"/><circle cx="12.2" cy="58.5" r="1.7" fill="#c8c8c8" stroke="#909090" stroke-width="0.9" shape-rendering="auto"/><rect x="12" y="11" width="1" height="4" fill="#a8a8a8"/><rect x="12" y="48" width="1" height="4" fill="#a8a8a8"/><circle cx="15.8" cy="5.5" r="1.7" fill="#c8c8c8" stroke="#909090" stroke-width="0.9" shape-rendering="auto"/><circle cx="15.8" cy="58.5" r="1.7" fill="#c8c8c8" stroke="#909090" stroke-width="0.9" shape-rendering="auto"/><rect x="15" y="11" width="1" height="4" fill="#a8a8a8"/><rect x="15" y="48" width="1" height="4" fill="#a8a8a8"/><circle cx="19.4" cy="5.5" r="1.7" fill="#c8c8c8" stroke="#909090" stroke-width="0.9" shape-rendering="auto"/><circle cx="19.4" cy="58.5" r="1.7" fill="#c8c8c8" stroke="#909090" stroke-width="0.9" shape-rendering="auto"/><rect x="19" y="11" width="1" height="4" fill="#a8a8a8"/><rect x="19" y="48" width="1" height="4" fill="#a8a8a8"/><circle cx="23.0" cy="5.5" r="1.7" fill="#c8c8c8" stroke="#909090" stroke-width="0.9" shape-rendering="auto"/><circle cx="23.0" cy="58.5" r="1.7" fill="#c8c8c8" stroke="#909090" stroke-width="0.9" shape-rendering="auto"/><rect x="23" y="11" width="1" height="4" fill="#a8a8a8"/><rect x="23" y="48" width="1" height="4" fill="#a8a8a8"/><circle cx="26.6" cy="5.5" r="1.7" fill="#c8c8c8" stroke="#909090" stroke-width="0.9" shape-rendering="auto"/><circle cx="26.6" cy="58.5" r="1.7" fill="#c8c8c8" stroke="#909090" stroke-width="0.9" shape-rendering="auto"/><rect x="26" y="11" width="1" height="4" fill="#a8a8a8"/><rect x="26" y="48" width="1" height="4" fill="#a8a8a8"/><circle cx="30.2" cy="5.5" r="1.7" fill="#c8c8c8" stroke="#909090" stroke-width="0.9" shape-rendering="auto"/><circle cx="30.2" cy="58.5" r="1.7" fill="#c8c8c8" stroke="#909090" stroke-width="0.9" shape-rendering="auto"/><rect x="30" y="11" width="1" height="4" fill="#a8a8a8"/><rect x="30" y="48" width="1" height="4" fill="#a8a8a8"/><circle cx="33.8" cy="5.5" r="1.7" fill="#c8c8c8" stroke="#909090" stroke-width="0.9" shape-rendering="auto"/><circle cx="33.8" cy="58.5" r="1.7" fill="#c8c8c8" stroke="#909090" stroke-width="0.9" shape-rendering="auto"/><rect x="33" y="11" width="1" height="4" fill="#a8a8a8"/><rect x="33" y="48" width="1" height="4" fill="#a8a8a8"/><circle cx="39.0" cy="5.5" r="1.7" fill="#c8c8c8" stroke="#909090" stroke-width="0.9" shape-rendering="auto"/><circle cx="39.0" cy="58.5" r="1.7" fill="#c8c8c8" stroke="#909090" stroke-width="0.9" shape-rendering="auto"/><rect x="39" y="11" width="1" height="4" fill="#a8a8a8"/><rect x="39" y="48" width="1" height="4" fill="#a8a8a8"/><circle cx="42.6" cy="5.5" r="1.7" fill="#c8c8c8" stroke="#909090" stroke-width="0.9" shape-rendering="auto"/><circle cx="42.6" cy="58.5" r="1.7" fill="#c8c8c8" stroke="#909090" stroke-width="0.9" shape-rendering="auto"/><rect x="42" y="11" width="1" height="4" fill="#a8a8a8"/><rect x="42" y="48" width="1" height="4" fill="#a8a8a8"/><circle cx="46.2" cy="5.5" r="1.7" fill="#c8c8c8" stroke="#909090" stroke-width="0.9" shape-rendering="auto"/><circle cx="46.2" cy="58.5" r="1.7" fill="#c8c8c8" stroke="#909090" stroke-width="0.9" shape-rendering="auto"/><rect x="46" y="11" width="1" height="4" fill="#a8a8a8"/><rect x="46" y="48" width="1" height="4" fill="#a8a8a8"/><circle cx="49.8" cy="5.5" r="1.7" fill="#c8c8c8" stroke="#909090" stroke-width="0.9" shape-rendering="auto"/><circle cx="49.8" cy="58.5" r="1.7" fill="#c8c8c8" stroke="#909090" stroke-width="0.9" shape-rendering="auto"/><rect x="49" y="11" width="1" height="4" fill="#a8a8a8"/><rect x="49" y="48" width="1" height="4" fill="#a8a8a8"/><circle cx="53.4" cy="5.5" r="1.7" fill="#c8c8c8" stroke="#909090" stroke-width="0.9" shape-rendering="auto"/><circle cx="53.4" cy="58.5" r="1.7" fill="#c8c8c8" stroke="#909090" stroke-width="0.9" shape-rendering="auto"/><rect x="53" y="11" width="1" height="4" fill="#a8a8a8"/><rect x="53" y="48" width="1" height="4" fill="#a8a8a8"/><circle cx="57.0" cy="5.5" r="1.7" fill="#c8c8c8" stroke="#909090" stroke-width="0.9" shape-rendering="auto"/><circle cx="57.0" cy="58.5" r="1.7" fill="#c8c8c8" stroke="#909090" stroke-width="0.9" shape-rendering="auto"/><rect x="57" y="11" width="1" height="4" fill="#a8a8a8"/><rect x="57" y="48" width="1" height="4" fill="#a8a8a8"/><circle cx="60.6" cy="5.5" r="1.7" fill="#c8c8c8" stroke="#909090" stroke-width="0.9" shape-rendering="auto"/><circle cx="60.6" cy="58.5" r="1.7" fill="#c8c8c8" stroke="#909090" stroke-width="0.9" shape-rendering="auto"/><rect x="60" y="11" width="1" height="4" fill="#a8a8a8"/><rect x="60" y="48" width="1" height="4" fill="#a8a8a8"/><circle cx="64.2" cy="5.5" r="1.7" fill="#c8c8c8" stroke="#909090" stroke-width="0.9" shape-rendering="auto"/><circle cx="64.2" cy="58.5" r="1.7" fill="#c8c8c8" stroke="#909090" stroke-width="0.9" shape-rendering="auto"/><rect x="64" y="11" width="1" height="4" fill="#a8a8a8"/><rect x="64" y="48" width="1" height="4" fill="#a8a8a8"/><circle cx="67.8" cy="5.5" r="1.7" fill="#c8c8c8" stroke="#909090" stroke-width="0.9" shape-rendering="auto"/><circle cx="67.8" cy="58.5" r="1.7" fill="#c8c8c8" stroke="#909090" stroke-width="0.9" shape-rendering="auto"/><rect x="67" y="11" width="1" height="4" fill="#a8a8a8"/><rect x="67" y="48" width="1" height="4" fill="#a8a8a8"/><rect x="2" y="9" width="69" height="1" fill="#b8b8b8"/><rect x="2" y="54" width="69" height="1" fill="#b8b8b8"/><rect x="2" y="16" width="69" height="1" fill="#d8d8d8"/><rect x="2" y="46" width="69" height="1" fill="#d8d8d8"/><rect x="75" y="0" width="38" height="64" fill="#000"/><rect x="76" y="1" width="36" height="62" fill="#fcfcfc"/><circle cx="79.0" cy="5.5" r="1.7" fill="#c8c8c8" stroke="#909090" stroke-width="0.9" shape-rendering="auto"/><circle cx="79.0" cy="58.5" r="1.7" fill="#c8c8c8" stroke="#909090" stroke-width="0.9" shape-rendering="auto"/><rect x="79" y="11" width="1" height="4" fill="#a8a8a8"/><rect x="79" y="48" width="1" height="4" fill="#a8a8a8"/><circle cx="82.6" cy="5.5" r="1.7" fill="#c8c8c8" stroke="#909090" stroke-width="0.9" shape-rendering="auto"/><circle cx="82.6" cy="58.5" r="1.7" fill="#c8c8c8" stroke="#909090" stroke-width="0.9" shape-rendering="auto"/><rect x="82" y="11" width="1" height="4" fill="#a8a8a8"/><rect x="82" y="48" width="1" height="4" fill="#a8a8a8"/><circle cx="86.2" cy="5.5" r="1.7" fill="#c8c8c8" stroke="#909090" stroke-width="0.9" shape-rendering="auto"/><circle cx="86.2" cy="58.5" r="1.7" fill="#c8c8c8" stroke="#909090" stroke-width="0.9" shape-rendering="auto"/><rect x="86" y="11" width="1" height="4" fill="#a8a8a8"/><rect x="86" y="48" width="1" height="4" fill="#a8a8a8"/><circle cx="89.8" cy="5.5" r="1.7" fill="#c8c8c8" stroke="#909090" stroke-width="0.9" shape-rendering="auto"/><circle cx="89.8" cy="58.5" r="1.7" fill="#c8c8c8" stroke="#909090" stroke-width="0.9" shape-rendering="auto"/><rect x="89" y="11" width="1" height="4" fill="#a8a8a8"/><rect x="89" y="48" width="1" height="4" fill="#a8a8a8"/><circle cx="93.4" cy="5.5" r="1.7" fill="#c8c8c8" stroke="#909090" stroke-width="0.9" shape-rendering="auto"/><circle cx="93.4" cy="58.5" r="1.7" fill="#c8c8c8" stroke="#909090" stroke-width="0.9" shape-rendering="auto"/><rect x="93" y="11" width="1" height="4" fill="#a8a8a8"/><rect x="93" y="48" width="1" height="4" fill="#a8a8a8"/><circle cx="97.0" cy="5.5" r="1.7" fill="#c8c8c8" stroke="#909090" stroke-width="0.9" shape-rendering="auto"/><circle cx="97.0" cy="58.5" r="1.7" fill="#c8c8c8" stroke="#909090" stroke-width="0.9" shape-rendering="auto"/><rect x="97" y="11" width="1" height="4" fill="#a8a8a8"/><rect x="97" y="48" width="1" height="4" fill="#a8a8a8"/><circle cx="100.6" cy="5.5" r="1.7" fill="#c8c8c8" stroke="#909090" stroke-width="0.9" shape-rendering="auto"/><circle cx="100.6" cy="58.5" r="1.7" fill="#c8c8c8" stroke="#909090" stroke-width="0.9" shape-rendering="auto"/><rect x="100" y="11" width="1" height="4" fill="#a8a8a8"/><rect x="100" y="48" width="1" height="4" fill="#a8a8a8"/><circle cx="104.2" cy="5.5" r="1.7" fill="#c8c8c8" stroke="#909090" stroke-width="0.9" shape-rendering="auto"/><circle cx="104.2" cy="58.5" r="1.7" fill="#c8c8c8" stroke="#909090" stroke-width="0.9" shape-rendering="auto"/><rect x="104" y="11" width="1" height="4" fill="#a8a8a8"/><rect x="104" y="48" width="1" height="4" fill="#a8a8a8"/><circle cx="107.8" cy="5.5" r="1.7" fill="#c8c8c8" stroke="#909090" stroke-width="0.9" shape-rendering="auto"/><circle cx="107.8" cy="58.5" r="1.7" fill="#c8c8c8" stroke="#909090" stroke-width="0.9" shape-rendering="auto"/><rect x="107" y="11" width="1" height="4" fill="#a8a8a8"/><rect x="107" y="48" width="1" height="4" fill="#a8a8a8"/><rect x="77" y="9" width="34" height="1" fill="#b8b8b8"/><rect x="77" y="54" width="34" height="1" fill="#b8b8b8"/><rect x="77" y="16" width="34" height="1" fill="#d8d8d8"/><rect x="77" y="46" width="34" height="1" fill="#d8d8d8"/><rect x="36" y="18" width="1" height="28" fill="#d8d8d8"/><rect x="40" y="18" width="32" height="28" fill="#f4f4f4"/><rect x="40" y="18" width="1" height="28" fill="#e0e0e0"/><rect x="71" y="18" width="1" height="28" fill="#e0e0e0"/><rect x="79" y="18" width="33" height="28" fill="#f4f4f4"/><rect x="79" y="18" width="1" height="28" fill="#e0e0e0"/><rect x="111" y="18" width="1" height="28" fill="#e0e0e0"/><rect x="6" y="21" width="4" height="4" fill="#909090"/><rect x="7" y="22" width="2" height="2" fill="#ffffff"/><rect x="11" y="22" width="10" height="3" fill="#a09098"/><rect x="24" y="21" width="3" height="3" fill="#00c000"/><rect x="23" y="24" width="5" height="1" fill="#606060"/><rect x="29" y="21" width="3" height="3" fill="#e02020"/><rect x="28" y="24" width="5" height="1" fill="#606060"/><rect x="6" y="26" width="12" height="12" fill="#303030"/><rect x="8" y="28" width="8" height="9" fill="#f0f0f0"/><rect x="7" y="29" width="10" height="6" fill="#f0f0f0"/><rect x="21" y="26" width="9" height="11" fill="#e8f4e8"/><rect x="24" y="28" width="1" height="1" fill="#00a000"/><rect x="25" y="28" width="1" height="1" fill="#00a000"/><rect x="26" y="28" width="1" height="1" fill="#00a000"/><rect x="23" y="29" width="1" height="1" fill="#00a000"/><rect x="27" y="29" width="1" height="1" fill="#00a000"/><rect x="23" y="30" width="1" height="1" fill="#00a000"/><rect x="27" y="30" width="1" height="1" fill="#00a000"/><rect x="24" y="31" width="1" height="1" fill="#00a000"/><rect x="25" y="31" width="1" height="1" fill="#00a000"/><rect x="26" y="31" width="1" height="1" fill="#00a000"/><rect x="23" y="32" width="1" height="1" fill="#00a000"/><rect x="27" y="32" width="1" height="1" fill="#00a000"/><rect x="23" y="33" width="1" height="1" fill="#00a000"/><rect x="27" y="33" width="1" height="1" fill="#00a000"/><rect x="24" y="34" width="1" height="1" fill="#00a000"/><rect x="25" y="34" width="1" height="1" fill="#00a000"/><rect x="26" y="34" width="1" height="1" fill="#00a000"/><rect x="10" y="41" width="3" height="1" fill="#40a040"/><rect x="11" y="40" width="1" height="3" fill="#40a040"/><rect x="24" y="40" width="3" height="3" fill="#000"/><rect x="43" y="21" width="2" height="2" fill="#00d040"/><rect x="47" y="21" width="2" height="2" fill="#00d040"/><rect x="50" y="21" width="2" height="2" fill="#00d040"/><rect x="54" y="21" width="2" height="2" fill="#00d040"/><rect x="57" y="21" width="2" height="2" fill="#00d040"/><rect x="61" y="21" width="2" height="2" fill="#00d040"/><rect x="65" y="21" width="2" height="2" fill="#00d040"/><rect x="68" y="21" width="2" height="2" fill="#00d040"/><rect x="43" y="41" width="2" height="2" fill="#00d040"/><rect x="47" y="41" width="2" height="2" fill="#00d040"/><rect x="50" y="41" width="2" height="2" fill="#00d040"/><rect x="61" y="41" width="2" height="2" fill="#00d040"/><rect x="65" y="41" width="2" height="2" fill="#00d040"/><rect x="68" y="41" width="2" height="2" fill="#00d040"/><rect x="82" y="21" width="2" height="2" fill="#e02020"/><rect x="82" y="41" width="2" height="2" fill="#e02020"/><rect x="86" y="21" width="2" height="2" fill="#e02020"/><rect x="86" y="41" width="2" height="2" fill="#e02020"/><rect x="89" y="21" width="2" height="2" fill="#e02020"/><rect x="89" y="41" width="2" height="2" fill="#e02020"/><rect x="93" y="21" width="2" height="2" fill="#e02020"/><rect x="93" y="41" width="2" height="2" fill="#e02020"/><rect x="96" y="21" width="2" height="2" fill="#e02020"/><rect x="96" y="41" width="2" height="2" fill="#e02020"/><rect x="100" y="21" width="2" height="2" fill="#e02020"/><rect x="100" y="41" width="2" height="2" fill="#e02020"/><rect x="104" y="21" width="2" height="2" fill="#e02020"/><rect x="104" y="41" width="2" height="2" fill="#e02020"/><rect x="107" y="21" width="2" height="2" fill="#e02020"/><rect x="107" y="41" width="2" height="2" fill="#e02020"/></svg>
<svg style="position:absolute;left:607px;top:263px" width="12" height="12" viewBox="0 0 12 12" shape-rendering="crispEdges"><rect x="4" y="0" width="1" height="1" fill="#808080"/><rect x="5" y="0" width="1" height="1" fill="#808080"/><rect x="6" y="0" width="1" height="1" fill="#808080"/><rect x="7" y="0" width="1" height="1" fill="#808080"/><rect x="2" y="1" width="1" height="1" fill="#808080"/><rect x="3" y="1" width="1" height="1" fill="#808080"/><rect x="4" y="1" width="1" height="1" fill="#000"/><rect x="5" y="1" width="1" height="1" fill="#000"/><rect x="6" y="1" width="1" height="1" fill="#000"/><rect x="7" y="1" width="1" height="1" fill="#000"/><rect x="8" y="1" width="1" height="1" fill="#808080"/><rect x="9" y="1" width="1" height="1" fill="#808080"/><rect x="1" y="2" width="1" height="1" fill="#808080"/><rect x="2" y="2" width="1" height="1" fill="#000"/><rect x="3" y="2" width="1" height="1" fill="#000"/><rect x="4" y="2" width="1" height="1" fill="#ffffff"/><rect x="5" y="2" width="1" height="1" fill="#ffffff"/><rect x="6" y="2" width="1" height="1" fill="#ffffff"/><rect x="7" y="2" width="1" height="1" fill="#ffffff"/><rect x="8" y="2" width="1" height="1" fill="#000"/><rect x="9" y="2" width="1" height="1" fill="#000"/><rect x="10" y="2" width="1" height="1" fill="#ffffff"/><rect x="1" y="3" width="1" height="1" fill="#808080"/><rect x="2" y="3" width="1" height="1" fill="#000"/><rect x="3" y="3" width="1" height="1" fill="#ffffff"/><rect x="4" y="3" width="1" height="1" fill="#ffffff"/><rect x="5" y="3" width="1" height="1" fill="#ffffff"/><rect x="6" y="3" width="1" height="1" fill="#ffffff"/><rect x="7" y="3" width="1" height="1" fill="#ffffff"/><rect x="8" y="3" width="1" height="1" fill="#ffffff"/><rect x="9" y="3" width="1" height="1" fill="#dfdfdf"/><rect x="10" y="3" width="1" height="1" fill="#ffffff"/><rect x="0" y="4" width="1" height="1" fill="#808080"/><rect x="1" y="4" width="1" height="1" fill="#000"/><rect x="2" y="4" width="1" height="1" fill="#ffffff"/><rect x="3" y="4" width="1" height="1" fill="#ffffff"/><rect x="4" y="4" width="1" height="1" fill="#ffffff"/><rect x="5" y="4" width="1" height="1" fill="#ffffff"/><rect x="6" y="4" width="1" height="1" fill="#ffffff"/><rect x="7" y="4" width="1" height="1" fill="#ffffff"/><rect x="8" y="4" width="1" height="1" fill="#ffffff"/><rect x="9" y="4" width="1" height="1" fill="#ffffff"/><rect x="10" y="4" width="1" height="1" fill="#dfdfdf"/><rect x="11" y="4" width="1" height="1" fill="#ffffff"/><rect x="0" y="5" width="1" height="1" fill="#808080"/><rect x="1" y="5" width="1" height="1" fill="#000"/><rect x="2" y="5" width="1" height="1" fill="#ffffff"/><rect x="3" y="5" width="1" height="1" fill="#ffffff"/><rect x="4" y="5" width="1" height="1" fill="#ffffff"/><rect x="5" y="5" width="1" height="1" fill="#ffffff"/><rect x="6" y="5" width="1" height="1" fill="#ffffff"/><rect x="7" y="5" width="1" height="1" fill="#ffffff"/><rect x="8" y="5" width="1" height="1" fill="#ffffff"/><rect x="9" y="5" width="1" height="1" fill="#ffffff"/><rect x="10" y="5" width="1" height="1" fill="#dfdfdf"/><rect x="11" y="5" width="1" height="1" fill="#ffffff"/><rect x="0" y="6" width="1" height="1" fill="#808080"/><rect x="1" y="6" width="1" height="1" fill="#000"/><rect x="2" y="6" width="1" height="1" fill="#ffffff"/><rect x="3" y="6" width="1" height="1" fill="#ffffff"/><rect x="4" y="6" width="1" height="1" fill="#ffffff"/><rect x="5" y="6" width="1" height="1" fill="#ffffff"/><rect x="6" y="6" width="1" height="1" fill="#ffffff"/><rect x="7" y="6" width="1" height="1" fill="#ffffff"/><rect x="8" y="6" width="1" height="1" fill="#ffffff"/><rect x="9" y="6" width="1" height="1" fill="#ffffff"/><rect x="10" y="6" width="1" height="1" fill="#dfdfdf"/><rect x="11" y="6" width="1" height="1" fill="#ffffff"/><rect x="0" y="7" width="1" height="1" fill="#808080"/><rect x="1" y="7" width="1" height="1" fill="#000"/><rect x="2" y="7" width="1" height="1" fill="#ffffff"/><rect x="3" y="7" width="1" height="1" fill="#ffffff"/><rect x="4" y="7" width="1" height="1" fill="#ffffff"/><rect x="5" y="7" width="1" height="1" fill="#ffffff"/><rect x="6" y="7" width="1" height="1" fill="#ffffff"/><rect x="7" y="7" width="1" height="1" fill="#ffffff"/><rect x="8" y="7" width="1" height="1" fill="#ffffff"/><rect x="9" y="7" width="1" height="1" fill="#ffffff"/><rect x="10" y="7" width="1" height="1" fill="#dfdfdf"/><rect x="11" y="7" width="1" height="1" fill="#ffffff"/><rect x="1" y="8" width="1" height="1" fill="#808080"/><rect x="2" y="8" width="1" height="1" fill="#000"/><rect x="3" y="8" width="1" height="1" fill="#ffffff"/><rect x="4" y="8" width="1" height="1" fill="#ffffff"/><rect x="5" y="8" width="1" height="1" fill="#ffffff"/><rect x="6" y="8" width="1" height="1" fill="#ffffff"/><rect x="7" y="8" width="1" height="1" fill="#ffffff"/><rect x="8" y="8" width="1" height="1" fill="#ffffff"/><rect x="9" y="8" width="1" height="1" fill="#dfdfdf"/><rect x="10" y="8" width="1" height="1" fill="#ffffff"/><rect x="1" y="9" width="1" height="1" fill="#ffffff"/><rect x="2" y="9" width="1" height="1" fill="#dfdfdf"/><rect x="3" y="9" width="1" height="1" fill="#dfdfdf"/><rect x="4" y="9" width="1" height="1" fill="#ffffff"/><rect x="5" y="9" width="1" height="1" fill="#ffffff"/><rect x="6" y="9" width="1" height="1" fill="#ffffff"/><rect x="7" y="9" width="1" height="1" fill="#ffffff"/><rect x="8" y="9" width="1" height="1" fill="#dfdfdf"/><rect x="9" y="9" width="1" height="1" fill="#dfdfdf"/><rect x="10" y="9" width="1" height="1" fill="#ffffff"/><rect x="2" y="10" width="1" height="1" fill="#ffffff"/><rect x="3" y="10" width="1" height="1" fill="#ffffff"/><rect x="4" y="10" width="1" height="1" fill="#dfdfdf"/><rect x="5" y="10" width="1" height="1" fill="#dfdfdf"/><rect x="6" y="10" width="1" height="1" fill="#dfdfdf"/><rect x="7" y="10" width="1" height="1" fill="#dfdfdf"/><rect x="8" y="10" width="1" height="1" fill="#ffffff"/><rect x="9" y="10" width="1" height="1" fill="#ffffff"/><rect x="4" y="11" width="1" height="1" fill="#ffffff"/><rect x="5" y="11" width="1" height="1" fill="#ffffff"/><rect x="6" y="11" width="1" height="1" fill="#ffffff"/><rect x="7" y="11" width="1" height="1" fill="#ffffff"/><rect x="4" y="5" width="4" height="2" fill="#000"/><rect x="5" y="4" width="2" height="4" fill="#000"/></svg>
<div style="position:absolute;left:188px;top:332px;width:830px;height:1px;background:#808080;"></div>
<div style="position:absolute;left:188px;top:332px;width:1px;height:189px;background:#808080;"></div>
<div style="position:absolute;left:189px;top:333px;width:830px;height:1px;background:#000;"></div>
<div style="position:absolute;left:189px;top:333px;width:1px;height:187px;background:#000;"></div>
<div style="position:absolute;left:188px;top:520px;width:830px;height:1px;background:#ffffff;"></div>
<div style="position:absolute;left:190px;top:519px;width:830px;height:1px;background:#dfdfdf;"></div>
<div style="position:absolute;left:190px;top:334px;width:100px;height:18px;background:#c0c0c0;box-sizing:border-box;border-top:1px solid #fff;border-left:1px solid #fff;border-right:1px solid #000"></div>
<div style="position:absolute;left:290px;top:334px;width:730px;height:18px;background:#c0c0c0;box-sizing:border-box;border-top:1px solid #fff;border-left:1px solid #fff"></div>
<div style="position:absolute;left:190px;top:351px;width:830px;height:1px;background:#d0d0d0;"></div>
<div class="t" style="left:195.10px;top:336.69px;color:#000;font-size:11px;font-weight:normal;line-height:13px;letter-spacing:-0.171px;">Centrála</div>
<div class="t" style="left:296.50px;top:336.69px;color:#000;font-size:11px;font-weight:normal;line-height:13px;letter-spacing:-0.148px;">Stručný popis jednotky</div>
<div style="position:absolute;left:190px;top:352px;width:830px;height:19px;background:#000080;"></div>
<div style="position:absolute;left:290px;top:352px;width:1px;height:19px;background:#8080c0;"></div>
<div class="t" style="left:195.10px;top:355.69px;color:#fff;font-size:11px;font-weight:normal;line-height:13px;letter-spacing:-0.283px;">CP-1004</div>
<div class="t" style="left:293.20px;top:355.69px;color:#fff;font-size:11px;font-weight:normal;line-height:13px;letter-spacing:-0.127px;">řada K, 192kB+64kB RAM, SCH, ETH, webserver, vnitřní periferie 8xDI, 6xDO, 4xAI, IRC, CNTR</div>
<div style="position:absolute;left:290px;top:371px;width:1px;height:19px;background:#808080;"></div>
<div style="position:absolute;left:190px;top:390px;width:830px;height:1px;background:#808080;"></div>
<div class="t" style="left:195.10px;top:374.69px;color:#000;font-size:11px;font-weight:normal;line-height:13px;letter-spacing:-0.283px;">CP-1005</div>
<div class="t" style="left:293.20px;top:374.69px;color:#000;font-size:11px;font-weight:normal;line-height:13px;letter-spacing:-0.115px;">řada K, 192kB+64kB RAM, SCH, ETH, webserver, vnitřní periferie 6xDI/AI, 2xAO, 6xDO</div>
<div style="position:absolute;left:290px;top:390px;width:1px;height:19px;background:#808080;"></div>
<div style="position:absolute;left:190px;top:409px;width:830px;height:1px;background:#808080;"></div>
<div class="t" style="left:195.10px;top:393.69px;color:#000;font-size:11px;font-weight:normal;line-height:13px;letter-spacing:-0.283px;">CP-1014</div>
<div class="t" style="left:293.20px;top:393.69px;color:#000;font-size:11px;font-weight:normal;line-height:13px;letter-spacing:-0.132px;">řada K, 192kB+64kB RAM, SCH, ETH, webserver, vnitřní periferie 8xDI, 6xDO, 4xAI, IRC, CNTR, displej 4x20, 6 tlačítek</div>
<div style="position:absolute;left:290px;top:409px;width:1px;height:19px;background:#808080;"></div>
<div style="position:absolute;left:190px;top:428px;width:830px;height:1px;background:#808080;"></div>
<div class="t" style="left:195.10px;top:412.69px;color:#000;font-size:11px;font-weight:normal;line-height:13px;letter-spacing:-0.283px;">CP-1015</div>
<div class="t" style="left:293.20px;top:412.69px;color:#000;font-size:11px;font-weight:normal;line-height:13px;letter-spacing:-0.110px;">řada K, 192kB+64kB RAM, SCH, ETH, webserver, vnitřní periferie 6xDI/AI, 2xAO, 6xDO, displej 4x20, 6 tlačítek</div>
<div style="position:absolute;left:290px;top:428px;width:1px;height:19px;background:#808080;"></div>
<div style="position:absolute;left:190px;top:447px;width:830px;height:1px;background:#808080;"></div>
<div class="t" style="left:195.10px;top:431.69px;color:#000;font-size:11px;font-weight:normal;line-height:13px;letter-spacing:-0.283px;">CP-1016</div>
<div class="t" style="left:293.20px;top:431.69px;color:#000;font-size:11px;font-weight:normal;line-height:13px;letter-spacing:-0.115px;">řada K, 192kB+64kB RAM, SCH, ETH, webserver, vnitřní periferie, displej 4x20, 6 tlačítek</div>
</body></html>
